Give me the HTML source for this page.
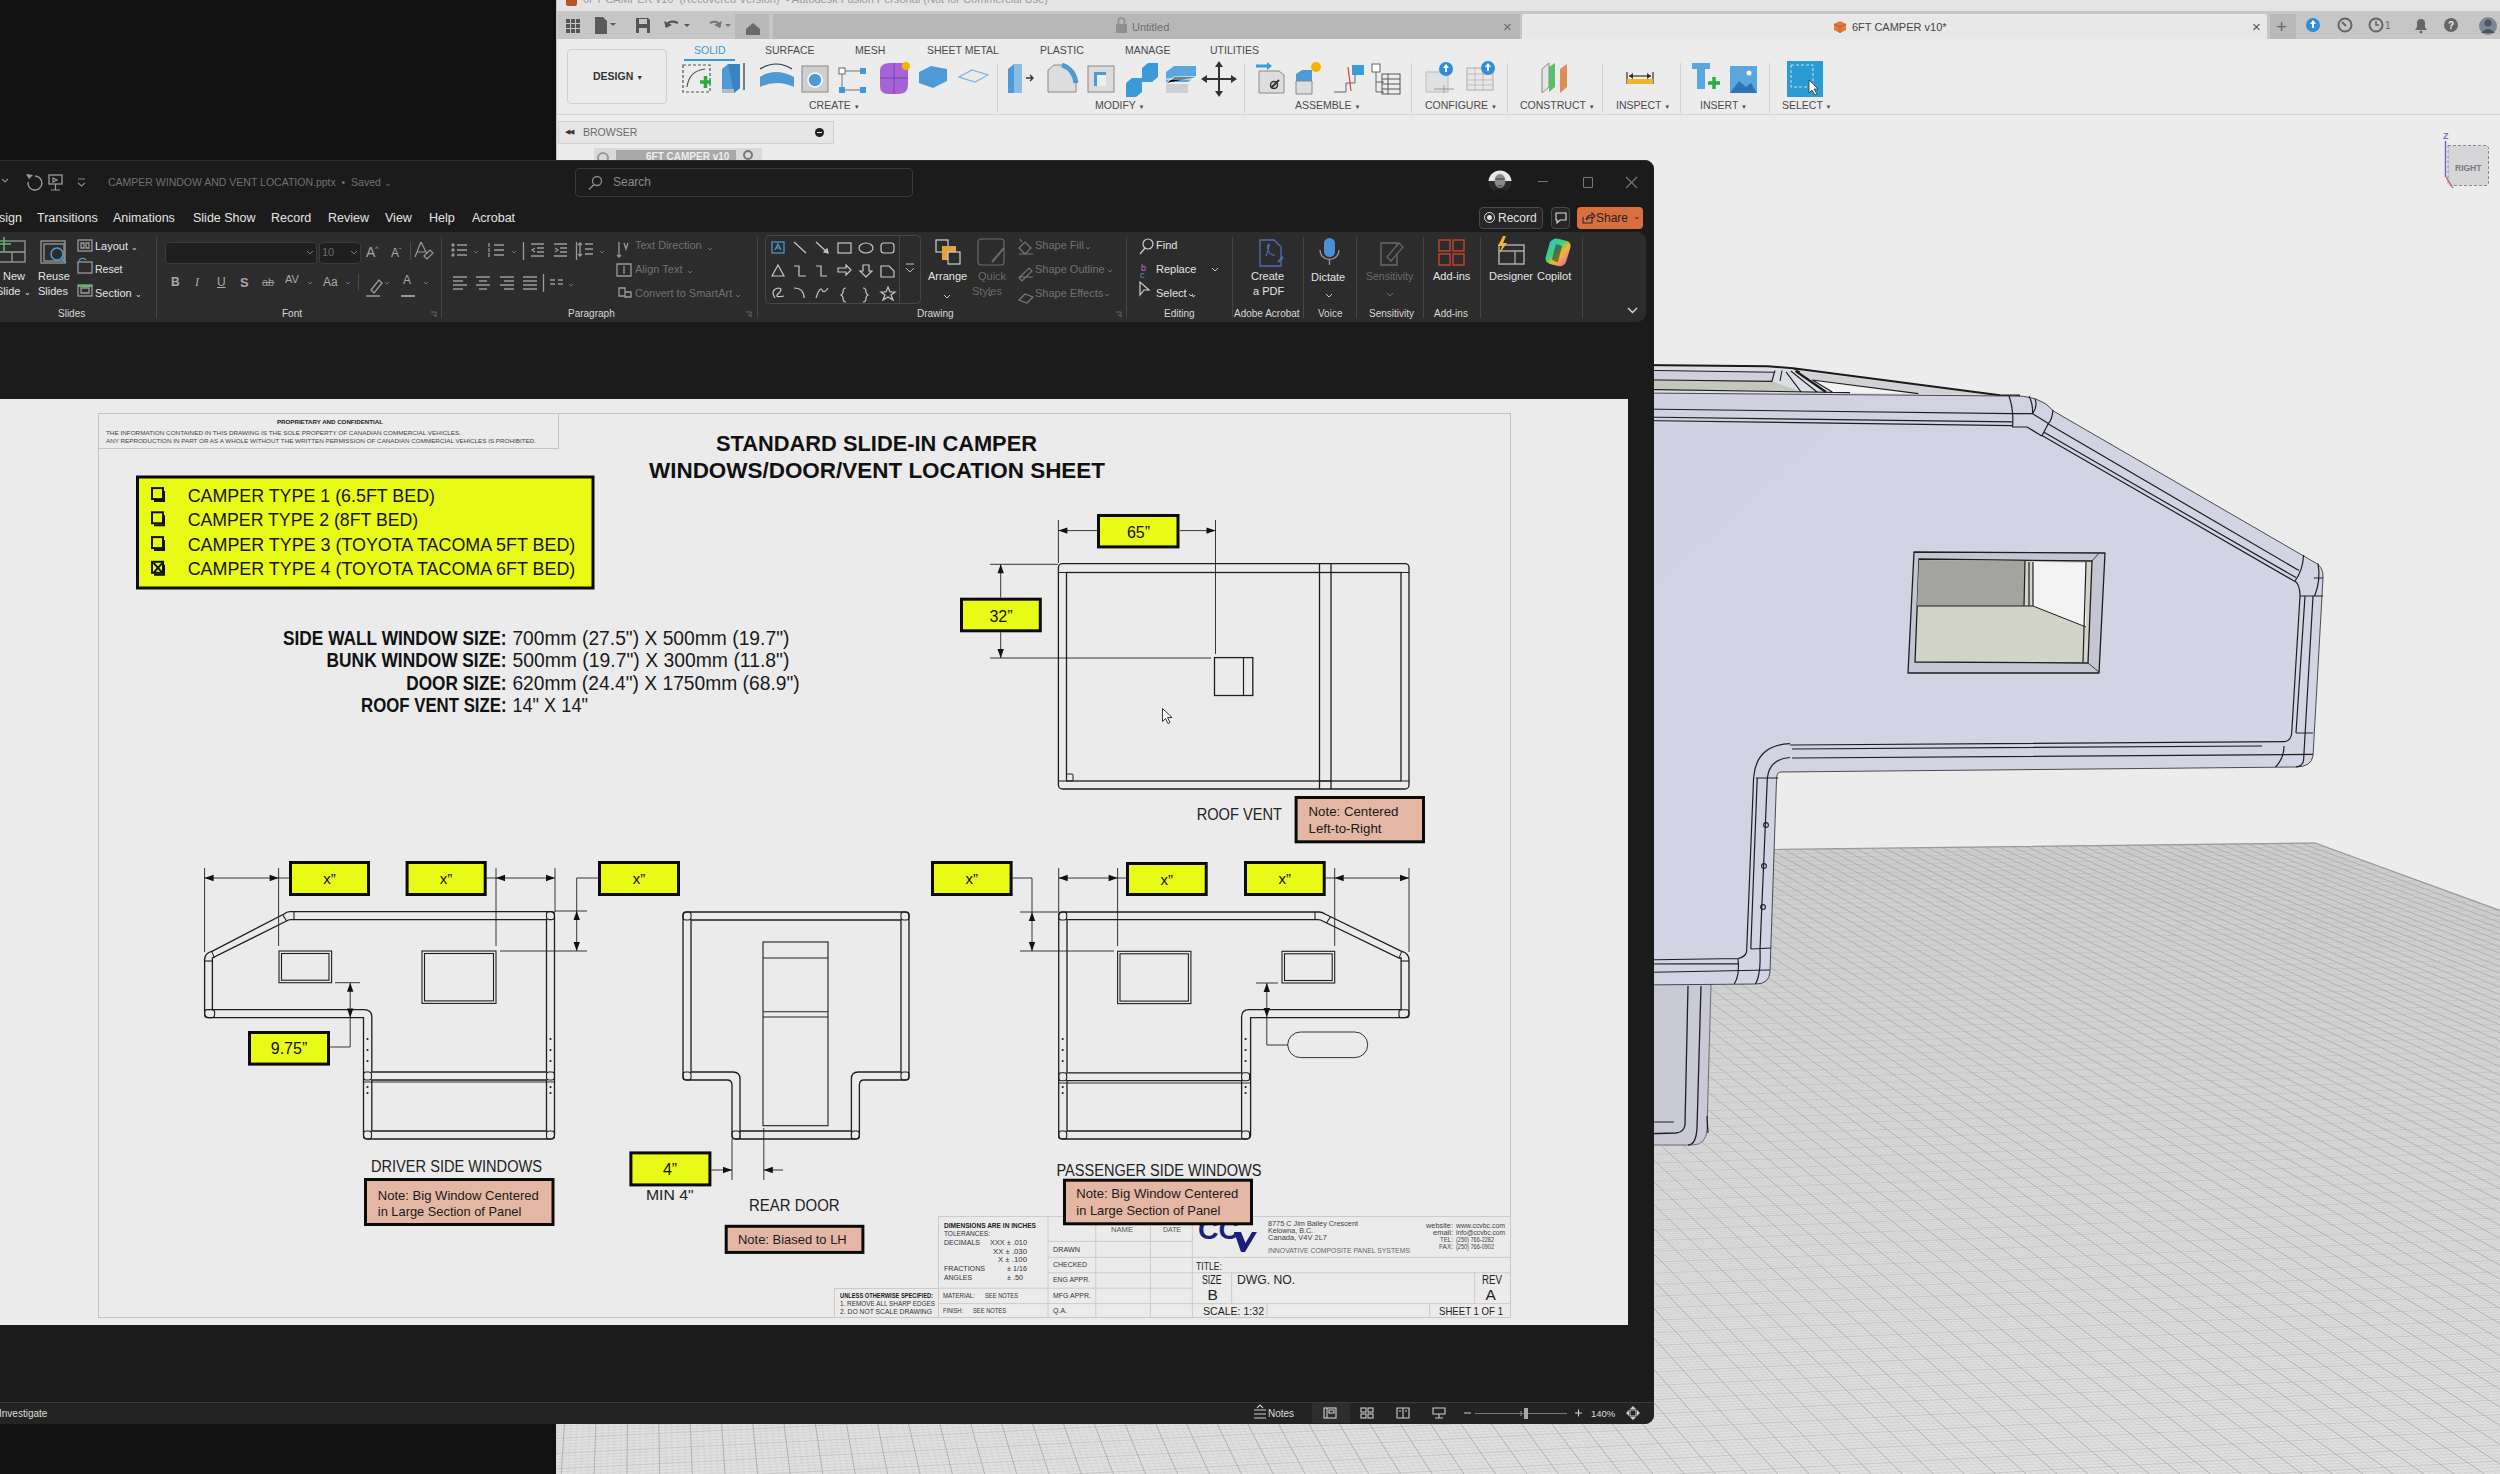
<!DOCTYPE html>
<html><head><meta charset="utf-8">
<style>
*{margin:0;padding:0;box-sizing:border-box}
html,body{width:2500px;height:1474px;overflow:hidden;background:#0f0f0f;font-family:"Liberation Sans",sans-serif;position:relative}
.a{position:absolute}
.t{position:absolute;white-space:nowrap;line-height:1}
#fus{left:556px;top:0;width:1944px;height:1474px;background:#ececec;overflow:hidden}
.fl{position:absolute;white-space:nowrap;line-height:1;font-size:10.5px;color:#4a4a4a}
.ft{position:absolute;white-space:nowrap;line-height:1;font-size:10.5px;color:#505050}
#ppt{left:0;top:160px;width:1654px;height:1264px;background:#1b1b1b;border-radius:0 9px 9px 0;overflow:hidden;box-shadow:inset 0 1px 0 #2f2f2f}
#ribbon{left:0;top:72px;width:1646px;height:90px;background:#2c2c2c;border-radius:0 9px 9px 0}
.w{position:absolute;white-space:nowrap;line-height:1;color:#e4e4e4;font-size:12px}
.g{position:absolute;white-space:nowrap;line-height:1;color:#7c7c7c;font-size:12px}
.gl{position:absolute;white-space:nowrap;line-height:1;color:#d8d8d8;font-size:11px}
.sep{position:absolute;width:1px;background:#454545}
#status{left:0;top:1242px;width:1654px;height:22px;background:#232323;border-top:1px solid #3b3b3b}
#slide{left:0;top:239px;width:1628px;height:926px;background:#ebebeb}
</style></head><body>

<div id="fus" class="a">
  <div class="a" style="left:0;top:0;width:1944px;height:11px;background:#e4e4e4;overflow:hidden">
    <div class="a" style="left:10px;top:-5px;width:11px;height:11px;background:#b5532c;border-radius:2px"></div>
    <div class="t" style="left:27px;top:-6px;font-size:11px;color:#9a9a9a">6FT CAMPER v10 &nbsp;(Recovered Version) &nbsp;- Autodesk Fusion Personal (Not for Commercial Use)</div>
  </div>
  <div class="a" style="left:0;top:11px;width:1944px;height:28px;background:#c6c6c6"></div>
  <div class="a" style="left:179px;top:14px;width:34px;height:25px;background:#b9b9b9"></div>
  <div class="a" style="left:217px;top:14px;width:747px;height:25px;background:#b7b7b7"></div>
  <div class="a" style="left:966px;top:14px;width:745px;height:25px;background:#e8e8e8;border-radius:2px 2px 0 0"></div>
  <div class="a" style="left:1714px;top:14px;width:26px;height:25px;background:#b9b9b9"></div>
  <!-- qat icons -->
  <svg class="a" style="left:0;top:11px" width="230" height="28">
    <g fill="#555"><rect x="10" y="8" width="4" height="4"/><rect x="15" y="8" width="4" height="4"/><rect x="20" y="8" width="4" height="4"/><rect x="10" y="13" width="4" height="4"/><rect x="15" y="13" width="4" height="4"/><rect x="20" y="13" width="4" height="4"/><rect x="10" y="18" width="4" height="4"/><rect x="15" y="18" width="4" height="4"/><rect x="20" y="18" width="4" height="4"/></g>
    <path d="M39 6h8l4 4v13h-12z" fill="#5a5a5a"/><path d="M54 12l3 3 3-3z" fill="#5a5a5a"/>
    <path d="M80 7h12l2 2v13h-14z M83 8v5h8v-5z M83 17h8v5h-8z" fill="#555" fill-rule="evenodd"/>
    <path d="M110 16q2-8 12-4" stroke="#555" stroke-width="2.2" fill="none"/><path d="M108 10l2 7 6-3z" fill="#555"/><path d="M128 13l3 3 3-3z" fill="#555"/>
    <path d="M164 16q-2-8-10-4" stroke="#777" stroke-width="2" fill="none"/><path d="M166 10l-2 7-6-3z" fill="#777"/><path d="M169 13l3 3 3-3z" fill="#777"/>
    <path d="M190 18l7-6 7 6v6h-14z" fill="#6a6a6a"/>
  </svg>
  <svg class="a" style="left:556px;top:15px" width="20" height="22"><rect x="4" y="9" width="11" height="9" rx="1" fill="#8f8f8f"/><path d="M6.5 9v-3a3 3 0 0 1 6 0v3" stroke="#8f8f8f" stroke-width="1.6" fill="none"/></svg>
  <div class="ft" style="left:576px;top:22px;font-size:11px;color:#6e6e6e">Untitled</div>
  <div class="ft" style="left:947px;top:19px;font-size:15px;color:#6a6a6a">×</div>
  <svg class="a" style="left:1277px;top:20px" width="14" height="14"><path d="M7 1l6 3v6l-6 3-6-3v-6z" fill="#e07b39"/><path d="M1 4l6 3 6-3M7 7v6" stroke="#c05f22" stroke-width="1" fill="none"/></svg>
  <div class="ft" style="left:1296px;top:22px;font-size:11px;color:#444">6FT CAMPER v10*</div>
  <div class="ft" style="left:1696px;top:19px;font-size:15px;color:#555">×</div>
  <div class="ft" style="left:1720px;top:17px;font-size:19px;color:#666">+</div>
  <svg class="a" style="left:1748px;top:14px" width="196" height="25">
    <circle cx="9" cy="11" r="7" fill="#2f8ddb"/><path d="M9 6l-3 4h2v4h2v-4h2z" fill="#fff"/>
    <circle cx="41" cy="11" r="6.5" fill="none" stroke="#666" stroke-width="2"/><path d="M38 8l4 4" stroke="#666" stroke-width="2"/>
    <circle cx="72" cy="11" r="6.5" fill="none" stroke="#666" stroke-width="2"/><path d="M72 7v4h3" stroke="#666" stroke-width="1.5" fill="none"/>
    <text x="81" y="15" font-size="10" fill="#666" font-family="Liberation Sans">1</text>
    <path d="M111 16h12l-2-3v-4a4 4 0 0 0-8 0v4z" fill="#666"/><circle cx="117" cy="18" r="1.5" fill="#666"/>
    <circle cx="147" cy="11" r="7" fill="#666"/><text x="144" y="15" font-size="10" font-weight="bold" fill="#ececec" font-family="Liberation Sans">?</text>
    <circle cx="184" cy="12" r="9" fill="#7d8693"/><circle cx="184" cy="9" r="3.5" fill="#4b5563"/><path d="M177 19q7-8 14 0" fill="#4b5563"/>
  </svg>
  <!-- toolbar -->
  <div class="a" style="left:0;top:39px;width:1944px;height:76px;background:#ececec;border-bottom:1px solid #d4d4d4"></div>
  <div class="a" style="left:11px;top:49px;width:100px;height:55px;border:1px solid #d0d0d0;border-radius:4px;background:#ebebeb"></div>
  <div class="t" style="left:37px;top:71px;font-size:10.5px;font-weight:bold;color:#333">DESIGN <span style="font-size:7px">▼</span></div>
  <div class="fl" style="left:138px;top:45px;color:#3a9ad5">SOLID</div>
  <div class="a" style="left:128px;top:59px;width:51px;height:2px;background:#2e9bd6"></div>
  <div class="fl" style="left:209px;top:45px">SURFACE</div>
  <div class="fl" style="left:299px;top:45px">MESH</div>
  <div class="fl" style="left:371px;top:45px">SHEET METAL</div>
  <div class="fl" style="left:484px;top:45px">PLASTIC</div>
  <div class="fl" style="left:569px;top:45px">MANAGE</div>
  <div class="fl" style="left:654px;top:45px">UTILITIES</div>
  <div class="fl" style="left:253px;top:100px">CREATE <span style="font-size:6px">▼</span></div>
  <div class="fl" style="left:539px;top:100px">MODIFY <span style="font-size:6px">▼</span></div>
  <div class="fl" style="left:739px;top:100px">ASSEMBLE <span style="font-size:6px">▼</span></div>
  <div class="fl" style="left:869px;top:100px">CONFIGURE <span style="font-size:6px">▼</span></div>
  <div class="fl" style="left:964px;top:100px">CONSTRUCT <span style="font-size:6px">▼</span></div>
  <div class="fl" style="left:1060px;top:100px">INSPECT <span style="font-size:6px">▼</span></div>
  <div class="fl" style="left:1144px;top:100px">INSERT <span style="font-size:6px">▼</span></div>
  <div class="fl" style="left:1226px;top:100px">SELECT <span style="font-size:6px">▼</span></div>
  <svg class="a" style="left:0;top:39px" width="1300" height="76">
    <g stroke="#d2d2d2" stroke-width="1"><path d="M441.5 24v50M688.5 24v50M855.5 24v50M951.5 24v50M1046.5 24v50M1124.5 24v50M1213.5 24v50"/></g>
    <!-- create -->
    <rect x="127" y="26" width="27" height="27" fill="none" stroke="#555" stroke-width="1.2" stroke-dasharray="3 2"/><path d="M131 48q2-16 18-18" stroke="#555" fill="none" stroke-width="1.2"/><path d="M144 43h11M149.5 37v12" stroke="#2eaa3e" stroke-width="3.5"/>
    <path d="M166 30l6-5h12v24l-6 5h-12z" fill="#4e9ad6"/><path d="M172 25h12v24l-6 5z" fill="#3b82c0"/><path d="M166 50h12v4h-12z" fill="#bbb"/><path d="M188 24v27" stroke="#333" stroke-width="1.2"/>
    <path d="M204 38q15-10 34 0v10q-17-8-34 0z" fill="#4e9ad6"/><path d="M204 30q16-10 32 0" stroke="#333" fill="none" stroke-width="1.2"/>
    <rect x="246" y="27" width="26" height="26" fill="#cfcfcf" stroke="#888"/><circle cx="259" cy="41" r="7" fill="#4e9ad6" stroke="#fff" stroke-width="1.5"/>
    <rect x="283" y="29" width="6" height="6" fill="#fff" stroke="#666"/><rect x="304" y="29" width="6" height="6" fill="#3b9ad8"/><rect x="283" y="48" width="6" height="6" fill="#3b9ad8"/><rect x="304" y="48" width="6" height="6" fill="#3b9ad8"/><path d="M289 32h15M286 35v13M289 51h15" stroke="#777"/>
    <path d="M324 32q0-8 10-8h12q6 0 6 8v14q0 9-10 9h-10q-8 0-8-8z" fill="#a663d6"/><path d="M338 24v31M324 39h28" stroke="#7d3fb0"/><circle cx="350" cy="27" r="4" fill="#f5b400"/>
    <path d="M363 33l12-6 16 3v12l-14 7-14-5z" fill="#4e9ad6"/>
    <path d="M403 38l13-7 16 5-13 7z" fill="none" stroke="#7ab3e0" stroke-width="1.2"/>
    <!-- modify -->
    <path d="M452 30l6-5h8v29h-14z" fill="#4e9ad6"/><path d="M458 25h8v29h-8z" fill="#8bbde5"/><path d="M470 39h7M474 36l3 3-3 3" stroke="#333" stroke-width="1.4" fill="none"/>
    <path d="M492 53v-22l6-5h8q12 4 14 18v9z" fill="#ddd" stroke="#888"/><path d="M506 26q12 4 14 18" stroke="#4e9ad6" stroke-width="5" fill="none"/>
    <rect x="532" y="27" width="26" height="26" fill="#ddd" stroke="#888"/><path d="M538 33h12v14h-12z" fill="#4e9ad6"/><path d="M541 36h9v11h-9z" fill="#eee"/>
    <path d="M570 44l6-5h10v-10l6-5h10v14l-6 5h-10v10l-6 5h-10z" fill="#3b9ad8"/>
    <path d="M610 33l8-6h22v10l-8 6h-22z" fill="#5aa7e0"/><path d="M610 40h30M610 44l8-6h22" stroke="#fff" stroke-width="1"/><path d="M610 45h22v9h-22z" fill="#cfcfcf"/>
    <path d="M663 25v30M648 40h30" stroke="#333" stroke-width="2"/><path d="M663 22l-4 6h8zM663 58l-4-6h8zM645 40l6-4v8zM681 40l-6-4v8z" fill="#333"/>
    <!-- assemble -->
    <path d="M703 32h20l5 4v18h-25z" fill="#ddd" stroke="#888"/><path d="M700 27h12" stroke="#3b9ad8" stroke-width="3"/><path d="M711 23l5 4-5 4z" fill="#3b9ad8"/><path d="M715 49l8-8" stroke="#333" stroke-width="2"/><circle cx="718" cy="46" r="3.5" fill="none" stroke="#333" stroke-width="1.5"/>
    <path d="M740 35l6-4h10v24h-16z" fill="#4e9ad6"/><path d="M740 42h16v13h-16z" fill="#ddd" stroke="#888"/><circle cx="760" cy="28" r="5" fill="#f5b400"/>
    <path d="M778 53h12v-9h9v-16" stroke="#666" fill="none"/><path d="M792 28l3 24" stroke="#d44" stroke-width="1.2"/><rect x="796" y="26" width="12" height="10" fill="#3b9ad8"/>
    <rect x="816" y="25" width="8" height="8" fill="#fff" stroke="#666"/><path d="M820 33v20M820 43h8M820 53h8" stroke="#666"/><rect x="826" y="35" width="18" height="20" fill="none" stroke="#555"/><path d="M826 40h18M826 45h18M826 50h18M832 35v20" stroke="#555"/>
    <!-- configure -->
    <rect x="870" y="33" width="22" height="20" fill="#e0e0e0" stroke="#bbb"/><circle cx="890" cy="30" r="7" fill="#2f8ddb"/><path d="M890 25l-3 4h2v4h2v-4h2z" fill="#fff"/><path d="M878 50h20M888 46v8" stroke="#999"/>
    <rect x="911" y="29" width="26" height="22" fill="#e8e8e8" stroke="#aaa"/><path d="M911 35h26M919 29v22M911 41h26M911 46h26M927 29v22" stroke="#bbb"/><circle cx="932" cy="29" r="7" fill="#2f8ddb"/><path d="M932 24l-3 4h2v4h2v-4h2z" fill="#fff"/>
    <!-- construct -->
    <path d="M986 30l7-6v24l-7 6z" fill="#e5e5e5" stroke="#888"/><path d="M993 28l6-4v24l-6 5z" fill="#5bbf6a"/><path d="M1004 30l7-5v23l-7 6z" fill="#e08a55"/>
    <!-- inspect -->
    <path d="M1071 33v12M1097 33v12" stroke="#333" stroke-width="1.2"/><path d="M1073 37h22" stroke="#333" stroke-width="1.2"/><path d="M1073 37l4-3v6zM1095 37l-4-3v6z" fill="#333"/><rect x="1071" y="40" width="26" height="5" fill="#f0b429"/>
    <!-- insert -->
    <path d="M1136 24h18v6h-5v20h-8v-20h-5z" fill="#5aa7e0"/><path d="M1152 44h12M1158 38v12" stroke="#2eaa3e" stroke-width="3.5"/>
    <rect x="1174" y="27" width="27" height="27" fill="#5aa7e0"/><path d="M1174 54l9-12 7 6 5-4 6 10z" fill="#2f75b5"/><circle cx="1193" cy="34" r="2.5" fill="#fff7c0"/>
    <!-- select -->
    <rect x="1231" y="22" width="36" height="36" fill="#2b9bd4"/><rect x="1235" y="26" width="22" height="22" fill="none" stroke="#bfe6ff" stroke-dasharray="3 2"/><path d="M1253 41l0 13 3-3 3 5 2-1-3-5h4z" fill="#fff" stroke="#333" stroke-width=".8"/>
  </svg>
  <!-- browser -->
  <div class="a" style="left:2px;top:121px;width:276px;height:23px;background:#e6e6e6;border:1px solid #d0d0d0"></div>
  <div class="fl" style="left:9px;top:129px;font-size:6.5px;color:#333;letter-spacing:-1px">◀◀</div>
  <div class="fl" style="left:27px;top:127px;font-size:10.5px;color:#6a6a6a">BROWSER</div>
  <div class="a" style="left:259px;top:128px;width:9px;height:9px;border-radius:50%;background:#222"></div>
  <div class="a" style="left:261px;top:132px;width:5px;height:1px;background:#eee"></div>
  <div class="a" style="left:38px;top:148px;width:168px;height:12px;background:#dadada"></div>
  <div class="a" style="left:60px;top:150px;width:120px;height:10px;background:#a9a9a9"></div>
  <div class="t" style="left:90px;top:152px;font-size:10px;color:#eee;font-weight:bold">6FT CAMPER v10</div>
  <div class="a" style="left:187px;top:150px;width:10px;height:10px;border-radius:50%;border:2px solid #777"></div>
  <div class="a" style="left:41px;top:152px;width:12px;height:12px;border-radius:50%;border:2px solid #999"></div>
  <div class="a" style="left:0;top:0;width:1px;height:1474px;background:#c4c4c4"></div>
  <!-- view cube -->
  <svg class="a" style="left:1864px;top:120px" width="80" height="80">
    <text x="23" y="19" font-size="9" font-weight="bold" fill="#7f72c9" font-family="Liberation Sans">Z</text>
    <path d="M25.5 21v36" stroke="#6e62c0" stroke-width="1.4"/>
    <path d="M28 25.5h39l1.5 2v36l-1.5 2h-37l-2-2z" fill="#d6d6d8" stroke="#8a8a8a" stroke-width="1" stroke-dasharray="3 2"/>
    <path d="M26 57l7 11" stroke="#c45a6a" stroke-width="1.3"/>
    <text x="35" y="51" font-size="8.5" font-weight="bold" fill="#7a7a7a" font-family="Liberation Sans">RIGHT</text>
  </svg>
</div>

<!-- 3D viewport content -->
<svg class="a" style="left:0;top:0" width="2500" height="1474">
  <defs>
    <linearGradient id="gridg" x1="0" y1="0" x2="0" y2="1"><stop offset="0" stop-color="#d6d6d6"/><stop offset="0.3" stop-color="#dcdcdc"/><stop offset="1" stop-color="#e2e2e2"/></linearGradient>
    <linearGradient id="bodyg" x1="0" y1="0" x2="1" y2="1"><stop offset="0" stop-color="#d0d2e2"/><stop offset="1" stop-color="#d4d6e6"/></linearGradient>
  </defs>
  <polygon points="2315.0,843.0 545.7,866.0 437.3,1599.3 3841.4,1403.4" fill="url(#gridg)"/><path d="M2312.3 843.0L3836.8 1403.7M2309.6 843.1L3832.2 1404.0M2306.9 843.1L3827.5 1404.2M2304.2 843.1L3822.9 1404.5M2298.8 843.2L3813.7 1405.0M2296.1 843.2L3809.1 1405.3M2293.4 843.3L3804.4 1405.6M2290.7 843.3L3799.8 1405.8M2285.3 843.4L3790.5 1406.4M2282.6 843.4L3785.9 1406.6M2279.9 843.5L3781.2 1406.9M2277.2 843.5L3776.6 1407.2M2271.8 843.6L3767.3 1407.7M2269.1 843.6L3762.6 1408.0M2266.4 843.6L3758.0 1408.2M2263.7 843.7L3753.3 1408.5M2258.2 843.7L3743.9 1409.0M2255.5 843.8L3739.3 1409.3M2252.8 843.8L3734.6 1409.6M2250.1 843.8L3729.9 1409.8M2244.7 843.9L3720.5 1410.4M2242.0 843.9L3715.8 1410.7M2239.2 844.0L3711.1 1410.9M2236.5 844.0L3706.4 1411.2M2231.1 844.1L3697.0 1411.7M2228.3 844.1L3692.3 1412.0M2225.6 844.2L3687.6 1412.3M2222.9 844.2L3682.9 1412.6M2217.4 844.3L3673.4 1413.1M2214.7 844.3L3668.7 1413.4M2212.0 844.3L3664.0 1413.6M2209.3 844.4L3659.3 1413.9M2203.8 844.4L3649.8 1414.5M2201.1 844.5L3645.0 1414.7M2198.3 844.5L3640.3 1415.0M2195.6 844.6L3635.5 1415.3M2190.1 844.6L3626.0 1415.8M2187.4 844.7L3621.3 1416.1M2184.6 844.7L3616.5 1416.4M2181.9 844.7L3611.7 1416.6M2176.4 844.8L3602.2 1417.2M2173.7 844.8L3597.4 1417.5M2170.9 844.9L3592.6 1417.7M2168.2 844.9L3587.8 1418.0M2162.7 845.0L3578.3 1418.6M2159.9 845.0L3573.5 1418.8M2157.2 845.0L3568.7 1419.1M2154.4 845.1L3563.9 1419.4M2148.9 845.2L3554.3 1420.0M2146.2 845.2L3549.4 1420.2M2143.4 845.2L3544.6 1420.5M2140.7 845.3L3539.8 1420.8M2135.1 845.3L3530.2 1421.3M2132.4 845.4L3525.3 1421.6M2129.6 845.4L3520.5 1421.9M2126.9 845.4L3515.7 1422.2M2121.3 845.5L3506.0 1422.7M2118.6 845.6L3501.1 1423.0M2115.8 845.6L3496.3 1423.3M2113.0 845.6L3491.4 1423.6M2107.5 845.7L3481.7 1424.1M2104.7 845.7L3476.8 1424.4M2102.0 845.8L3472.0 1424.7M2099.2 845.8L3467.1 1425.0M2093.6 845.9L3457.3 1425.5M2090.9 845.9L3452.5 1425.8M2088.1 845.9L3447.6 1426.1M2085.3 846.0L3442.7 1426.4M2079.8 846.1L3432.9 1426.9M2077.0 846.1L3428.0 1427.2M2074.2 846.1L3423.1 1427.5M2071.4 846.2L3418.2 1427.8M2065.8 846.2L3408.4 1428.3M2063.1 846.3L3403.4 1428.6M2060.3 846.3L3398.5 1428.9M2057.5 846.3L3393.6 1429.2M2051.9 846.4L3383.7 1429.8M2049.1 846.5L3378.8 1430.0M2046.3 846.5L3373.9 1430.3M2043.5 846.5L3368.9 1430.6M2037.9 846.6L3359.0 1431.2M2035.1 846.6L3354.1 1431.5M2032.3 846.7L3349.1 1431.8M2029.5 846.7L3344.1 1432.0M2023.9 846.8L3334.2 1432.6M2021.1 846.8L3329.2 1432.9M2018.3 846.9L3324.3 1433.2M2015.5 846.9L3319.3 1433.5M2009.9 847.0L3309.3 1434.0M2007.1 847.0L3304.3 1434.3M2004.3 847.0L3299.3 1434.6M2001.5 847.1L3294.3 1434.9M1995.9 847.1L3284.3 1435.5M1993.1 847.2L3279.3 1435.8M1990.3 847.2L3274.3 1436.1M1987.4 847.3L3269.3 1436.3M1981.8 847.3L3259.2 1436.9M1979.0 847.4L3254.2 1437.2M1976.2 847.4L3249.2 1437.5M1973.4 847.4L3244.1 1437.8M1967.7 847.5L3234.1 1438.4M1964.9 847.5L3229.0 1438.7M1962.1 847.6L3224.0 1439.0M1959.3 847.6L3218.9 1439.2M1953.6 847.7L3208.8 1439.8M1950.8 847.7L3203.7 1440.1M1947.9 847.8L3198.6 1440.4M1945.1 847.8L3193.6 1440.7M1939.4 847.9L3183.4 1441.3M1936.6 847.9L3178.3 1441.6M1933.8 848.0L3173.2 1441.9M1930.9 848.0L3168.2 1442.2M1925.3 848.1L3158.0 1442.8M1922.4 848.1L3152.9 1443.0M1919.6 848.1L3147.7 1443.3M1916.8 848.2L3142.6 1443.6M1911.1 848.2L3132.4 1444.2M1908.2 848.3L3127.3 1444.5M1905.4 848.3L3122.2 1444.8M1902.5 848.4L3117.0 1445.1M1896.8 848.4L3106.8 1445.7M1894.0 848.5L3101.6 1446.0M1891.1 848.5L3096.5 1446.3M1888.3 848.5L3091.3 1446.6M1882.6 848.6L3081.0 1447.2M1879.7 848.7L3075.8 1447.5M1876.9 848.7L3070.7 1447.8M1874.0 848.7L3065.5 1448.1M1868.3 848.8L3055.2 1448.7M1865.4 848.8L3050.0 1449.0M1862.6 848.9L3044.8 1449.3M1859.7 848.9L3039.6 1449.6M1854.0 849.0L3029.2 1450.2M1851.1 849.0L3024.0 1450.5M1848.2 849.1L3018.8 1450.8M1845.4 849.1L3013.6 1451.1M1839.6 849.2L3003.2 1451.7M1836.8 849.2L2998.0 1452.0M1833.9 849.2L2992.7 1452.3M1831.0 849.3L2987.5 1452.6M1825.3 849.4L2977.1 1453.2M1822.4 849.4L2971.8 1453.5M1819.5 849.4L2966.6 1453.8M1816.6 849.5L2961.3 1454.1M1810.9 849.5L2950.8 1454.7M1808.0 849.6L2945.6 1455.0M1805.1 849.6L2940.3 1455.3M1802.2 849.7L2935.0 1455.6M1796.5 849.7L2924.5 1456.2M1793.6 849.8L2919.2 1456.5M1790.7 849.8L2913.9 1456.8M1787.8 849.8L2908.6 1457.1M1782.0 849.9L2898.1 1457.7M1779.1 850.0L2892.8 1458.0M1776.2 850.0L2887.5 1458.3M1773.3 850.0L2882.1 1458.6M1767.5 850.1L2871.5 1459.2M1764.6 850.1L2866.2 1459.5M1761.7 850.2L2860.9 1459.8M1758.8 850.2L2855.6 1460.2M1753.0 850.3L2844.9 1460.8M1750.1 850.3L2839.5 1461.1M1747.2 850.4L2834.2 1461.4M1744.3 850.4L2828.9 1461.7M1738.5 850.5L2818.2 1462.3M1735.6 850.5L2812.8 1462.6M1732.7 850.6L2807.4 1462.9M1729.8 850.6L2802.1 1463.2M1723.9 850.7L2791.3 1463.9M1721.0 850.7L2785.9 1464.2M1718.1 850.8L2780.6 1464.5M1715.2 850.8L2775.2 1464.8M1709.3 850.9L2764.4 1465.4M1706.4 850.9L2759.0 1465.7M1703.5 850.9L2753.6 1466.0M1700.6 851.0L2748.2 1466.3M1694.7 851.1L2737.3 1467.0M1691.8 851.1L2731.9 1467.3M1688.9 851.1L2726.5 1467.6M1685.9 851.2L2721.1 1467.9M1680.1 851.2L2710.2 1468.5M1677.1 851.3L2704.7 1468.8M1674.2 851.3L2699.3 1469.1M1671.3 851.4L2693.8 1469.5M1665.4 851.4L2682.9 1470.1M1662.5 851.5L2677.5 1470.4M1659.5 851.5L2672.0 1470.7M1656.6 851.6L2666.5 1471.0M1650.7 851.6L2655.6 1471.7M1647.8 851.7L2650.1 1472.0M1644.8 851.7L2644.6 1472.3M1641.9 851.7L2639.1 1472.6M1636.0 851.8L2628.1 1473.2M1633.0 851.9L2622.6 1473.6M1630.1 851.9L2617.1 1473.9M1627.1 851.9L2611.6 1474.2M1621.2 852.0L2600.5 1474.8M1618.3 852.0L2595.0 1475.1M1615.3 852.1L2589.5 1475.5M1612.3 852.1L2583.9 1475.8M1606.4 852.2L2572.9 1476.4M1603.5 852.2L2567.3 1476.7M1600.5 852.3L2561.8 1477.1M1597.5 852.3L2556.2 1477.4M1591.6 852.4L2545.1 1478.0M1588.6 852.4L2539.5 1478.3M1585.7 852.5L2533.9 1478.7M1582.7 852.5L2528.4 1479.0M1576.8 852.6L2517.2 1479.6M1573.8 852.6L2511.6 1479.9M1570.8 852.7L2506.0 1480.3M1567.8 852.7L2500.4 1480.6M1561.9 852.8L2489.2 1481.2M1558.9 852.8L2483.6 1481.6M1555.9 852.9L2478.0 1481.9M1552.9 852.9L2472.3 1482.2M1547.0 853.0L2461.1 1482.9M1544.0 853.0L2455.4 1483.2M1541.0 853.1L2449.8 1483.5M1538.0 853.1L2444.2 1483.8M1532.0 853.2L2432.9 1484.5M1529.1 853.2L2427.2 1484.8M1526.1 853.2L2421.5 1485.1M1523.1 853.3L2415.9 1485.5M1517.1 853.4L2404.5 1486.1M1514.1 853.4L2398.8 1486.4M1511.1 853.4L2393.2 1486.8M1508.1 853.5L2387.5 1487.1M1502.1 853.6L2376.1 1487.7M1499.1 853.6L2370.4 1488.1M1496.1 853.6L2364.7 1488.4M1493.1 853.7L2359.0 1488.7M1487.1 853.8L2347.5 1489.4M1484.1 853.8L2341.8 1489.7M1481.1 853.8L2336.1 1490.0M1478.0 853.9L2330.3 1490.4M1472.0 853.9L2318.9 1491.0M1469.0 854.0L2313.1 1491.4M1466.0 854.0L2307.4 1491.7M1463.0 854.1L2301.6 1492.0M1456.9 854.1L2290.1 1492.7M1453.9 854.2L2284.3 1493.0M1450.9 854.2L2278.5 1493.4M1447.9 854.3L2272.8 1493.7M1441.8 854.3L2261.2 1494.4M1438.8 854.4L2255.4 1494.7M1435.8 854.4L2249.6 1495.0M1432.8 854.5L2243.8 1495.4M1426.7 854.5L2232.2 1496.0M1423.7 854.6L2226.4 1496.4M1420.6 854.6L2220.5 1496.7M1417.6 854.7L2214.7 1497.0M1411.5 854.7L2203.0 1497.7M1408.5 854.8L2197.2 1498.0M1405.5 854.8L2191.4 1498.4M1402.4 854.9L2185.5 1498.7M1396.3 854.9L2173.8 1499.4M1393.3 855.0L2167.9 1499.7M1390.2 855.0L2162.1 1500.1M1387.2 855.1L2156.2 1500.4M1381.1 855.1L2144.4 1501.1M1378.1 855.2L2138.6 1501.4M1375.0 855.2L2132.7 1501.7M1372.0 855.2L2126.8 1502.1M1365.8 855.3L2115.0 1502.8M1362.8 855.4L2109.1 1503.1M1359.7 855.4L2103.1 1503.4M1356.7 855.4L2097.2 1503.8M1350.6 855.5L2085.4 1504.5M1347.5 855.6L2079.4 1504.8M1344.4 855.6L2073.5 1505.2M1341.4 855.6L2067.6 1505.5M1335.2 855.7L2055.7 1506.2M1332.2 855.8L2049.7 1506.5M1329.1 855.8L2043.7 1506.9M1326.0 855.8L2037.8 1507.2M1319.9 855.9L2025.8 1507.9M1316.8 856.0L2019.8 1508.2M1313.7 856.0L2013.9 1508.6M1310.7 856.0L2007.9 1508.9M1304.5 856.1L1995.9 1509.6M1301.4 856.2L1989.9 1510.0M1298.4 856.2L1983.9 1510.3M1295.3 856.2L1977.8 1510.7M1289.1 856.3L1965.8 1511.4M1286.0 856.4L1959.8 1511.7M1282.9 856.4L1953.7 1512.0M1279.8 856.4L1947.7 1512.4M1273.7 856.5L1935.6 1513.1M1270.6 856.6L1929.5 1513.4M1267.5 856.6L1923.5 1513.8M1264.4 856.6L1917.4 1514.1M1258.2 856.7L1905.3 1514.8M1255.1 856.8L1899.2 1515.2M1252.0 856.8L1893.1 1515.5M1248.9 856.8L1887.0 1515.9M1242.7 856.9L1874.8 1516.6M1239.6 857.0L1868.7 1516.9M1236.5 857.0L1862.6 1517.3M1233.4 857.0L1856.5 1517.6M1227.2 857.1L1844.3 1518.3M1224.1 857.2L1838.1 1518.7M1220.9 857.2L1832.0 1519.0M1217.8 857.3L1825.9 1519.4M1211.6 857.3L1813.6 1520.1M1208.5 857.4L1807.4 1520.5M1205.4 857.4L1801.3 1520.8M1202.2 857.5L1795.1 1521.2M1196.0 857.5L1782.8 1521.9M1192.9 857.6L1776.6 1522.2M1189.8 857.6L1770.4 1522.6M1186.6 857.7L1764.2 1523.0M1180.4 857.7L1751.8 1523.7M1177.3 857.8L1745.6 1524.0M1174.1 857.8L1739.4 1524.4M1171.0 857.9L1733.2 1524.7M1164.7 857.9L1720.7 1525.5M1161.6 858.0L1714.5 1525.8M1158.5 858.0L1708.3 1526.2M1155.3 858.1L1702.0 1526.5M1149.0 858.1L1689.5 1527.2M1145.9 858.2L1683.3 1527.6M1142.8 858.2L1677.0 1528.0M1139.6 858.3L1670.8 1528.3M1133.3 858.3L1658.2 1529.0M1130.2 858.4L1651.9 1529.4M1127.0 858.4L1645.6 1529.8M1123.9 858.5L1639.4 1530.1M1117.6 858.6L1626.8 1530.9M1114.4 858.6L1620.5 1531.2M1111.3 858.6L1614.1 1531.6M1108.1 858.7L1607.8 1531.9M1101.8 858.8L1595.2 1532.7M1098.6 858.8L1588.8 1533.0M1095.5 858.8L1582.5 1533.4M1092.3 858.9L1576.2 1533.8M1086.0 859.0L1563.5 1534.5M1082.8 859.0L1557.1 1534.9M1079.6 859.0L1550.7 1535.2M1076.5 859.1L1544.4 1535.6M1070.1 859.2L1531.6 1536.3M1067.0 859.2L1525.2 1536.7M1063.8 859.3L1518.8 1537.1M1060.6 859.3L1512.4 1537.4M1054.3 859.4L1499.6 1538.2M1051.1 859.4L1493.2 1538.5M1047.9 859.5L1486.8 1538.9M1044.7 859.5L1480.4 1539.3M1038.3 859.6L1467.5 1540.0M1035.2 859.6L1461.1 1540.4M1032.0 859.7L1454.6 1540.8M1028.8 859.7L1448.2 1541.1M1022.4 859.8L1435.2 1541.9M1019.2 859.8L1428.8 1542.3M1016.0 859.9L1422.3 1542.6M1012.8 859.9L1415.8 1543.0M1006.4 860.0L1402.9 1543.7M1003.2 860.0L1396.4 1544.1M1000.0 860.1L1389.9 1544.5M996.8 860.1L1383.4 1544.9M990.4 860.2L1370.3 1545.6M987.2 860.2L1363.8 1546.0M984.0 860.3L1357.3 1546.4M980.8 860.3L1350.8 1546.7M974.4 860.4L1337.7 1547.5M971.2 860.5L1331.1 1547.9M968.0 860.5L1324.6 1548.2M964.7 860.5L1318.0 1548.6M958.3 860.6L1304.9 1549.4M955.1 860.7L1298.3 1549.8M951.9 860.7L1291.7 1550.1M948.7 860.7L1285.1 1550.5M942.2 860.8L1271.9 1551.3M939.0 860.9L1265.3 1551.7M935.8 860.9L1258.7 1552.0M932.5 861.0L1252.1 1552.4M926.1 861.0L1238.9 1553.2M922.8 861.1L1232.2 1553.6M919.6 861.1L1225.6 1553.9M916.4 861.2L1218.9 1554.3M909.9 861.3L1205.6 1555.1M906.7 861.3L1199.0 1555.5M903.4 861.3L1192.3 1555.9M900.2 861.4L1185.6 1556.2M893.7 861.5L1172.3 1557.0M890.5 861.5L1165.6 1557.4M887.2 861.5L1158.9 1557.8M884.0 861.6L1152.2 1558.2M877.5 861.7L1138.8 1558.9M874.2 861.7L1132.1 1559.3M871.0 861.8L1125.3 1559.7M867.7 861.8L1118.6 1560.1M861.2 861.9L1105.1 1560.9M857.9 861.9L1098.4 1561.3M854.7 862.0L1091.6 1561.7M851.4 862.0L1084.9 1562.0M844.9 862.1L1071.3 1562.8M841.6 862.1L1064.6 1563.2M838.4 862.2L1057.8 1563.6M835.1 862.2L1051.0 1564.0M828.6 862.3L1037.4 1564.8M825.3 862.3L1030.6 1565.2M822.0 862.4L1023.8 1565.6M818.8 862.4L1017.0 1565.9M812.2 862.5L1003.3 1566.7M808.9 862.6L996.5 1567.1M805.6 862.6L989.6 1567.5M802.4 862.6L982.8 1567.9M795.8 862.7L969.1 1568.7M792.5 862.8L962.2 1569.1M789.2 862.8L955.4 1569.5M785.9 862.9L948.5 1569.9M779.4 862.9L934.7 1570.7M776.1 863.0L927.8 1571.1M772.8 863.0L920.9 1571.5M769.5 863.1L914.0 1571.9M762.9 863.2L900.2 1572.7M759.6 863.2L893.3 1573.1M756.3 863.2L886.3 1573.5M753.0 863.3L879.4 1573.9M746.4 863.4L865.5 1574.7M743.1 863.4L858.6 1575.1M739.8 863.5L851.6 1575.5M736.5 863.5L844.6 1575.9M729.9 863.6L830.7 1576.7M726.6 863.6L823.7 1577.1M723.2 863.7L816.7 1577.5M719.9 863.7L809.7 1577.9M713.3 863.8L795.7 1578.7M710.0 863.8L788.7 1579.1M706.7 863.9L781.7 1579.5M703.3 863.9L774.7 1579.9M696.7 864.0L760.6 1580.7M693.4 864.1L753.5 1581.1M690.0 864.1L746.5 1581.5M686.7 864.1L739.4 1581.9M680.1 864.2L725.3 1582.7M676.7 864.3L718.2 1583.1M673.4 864.3L711.1 1583.5M670.1 864.4L704.0 1584.0M663.4 864.5L689.9 1584.8M660.0 864.5L682.7 1585.2M656.7 864.5L675.6 1585.6M653.4 864.6L668.5 1586.0M646.7 864.7L654.3 1586.8M643.3 864.7L647.1 1587.2M640.0 864.8L640.0 1587.6M636.6 864.8L632.8 1588.0M629.9 864.9L618.5 1588.9M626.6 864.9L611.3 1589.3M623.2 865.0L604.2 1589.7M619.9 865.0L597.0 1590.1M613.2 865.1L582.6 1590.9M609.8 865.1L575.4 1591.4M606.4 865.2L568.2 1591.8M603.1 865.2L561.0 1592.2M596.4 865.3L546.5 1593.0M593.0 865.4L539.3 1593.4M589.6 865.4L532.1 1593.8M586.3 865.5L524.8 1594.3M579.5 865.5L510.3 1595.1M576.1 865.6L503.0 1595.5M572.8 865.6L495.8 1595.9M569.4 865.7L488.5 1596.4M562.6 865.8L473.9 1597.2M559.3 865.8L466.6 1597.6" stroke="#cdcdcd" stroke-width="0.5" fill="none"/><path d="M2316.9 843.7L545.6 866.8M2318.9 844.4L545.4 867.6M2320.8 845.1L545.3 868.5M2322.8 845.9L545.2 869.3M2326.7 847.3L544.9 871.0M2328.7 848.0L544.8 871.8M2330.7 848.8L544.7 872.7M2332.7 849.5L544.6 873.5M2336.6 850.9L544.3 875.2M2338.6 851.7L544.2 876.1M2340.6 852.4L544.1 877.0M2342.7 853.2L543.9 877.8M2346.7 854.6L543.7 879.5M2348.7 855.4L543.5 880.4M2350.7 856.1L543.4 881.3M2352.7 856.9L543.3 882.2M2356.8 858.4L543.0 883.9M2358.9 859.1L542.9 884.8M2360.9 859.9L542.8 885.7M2363.0 860.6L542.6 886.5M2367.1 862.1L542.4 888.3M2369.2 862.9L542.2 889.2M2371.2 863.6L542.1 890.1M2373.3 864.4L542.0 891.0M2377.5 865.9L541.7 892.8M2379.6 866.7L541.6 893.7M2381.7 867.5L541.4 894.6M2383.8 868.3L541.3 895.5M2388.0 869.8L541.0 897.3M2390.1 870.6L540.9 898.2M2392.2 871.4L540.8 899.2M2394.4 872.1L540.6 900.1M2398.6 873.7L540.4 901.9M2400.8 874.5L540.2 902.9M2402.9 875.3L540.1 903.8M2405.1 876.1L539.9 904.7M2409.4 877.7L539.7 906.6M2411.6 878.5L539.5 907.5M2413.8 879.3L539.4 908.5M2415.9 880.1L539.3 909.4M2420.3 881.7L539.0 911.3M2422.5 882.5L538.8 912.3M2424.7 883.3L538.7 913.2M2426.9 884.1L538.5 914.2M2431.4 885.7L538.3 916.1M2433.6 886.5L538.1 917.1M2435.8 887.4L538.0 918.1M2438.1 888.2L537.8 919.0M2442.5 889.8L537.5 921.0M2444.8 890.7L537.4 922.0M2447.1 891.5L537.3 922.9M2449.3 892.3L537.1 923.9M2453.9 894.0L536.8 925.9M2456.2 894.8L536.7 926.9M2458.4 895.7L536.5 927.9M2460.7 896.5L536.4 928.9M2465.3 898.2L536.1 930.9M2467.6 899.0L535.9 931.9M2470.0 899.9L535.8 932.9M2472.3 900.7L535.6 933.9M2476.9 902.5L535.3 936.0M2479.3 903.3L535.2 937.0M2481.6 904.2L535.0 938.0M2484.0 905.0L534.9 939.1M2488.7 906.8L534.6 941.1M2491.1 907.6L534.4 942.2M2493.5 908.5L534.3 943.2M2495.8 909.4L534.1 944.3M2500.6 911.2L533.8 946.4M2503.0 912.0L533.6 947.4M2505.4 912.9L533.5 948.5M2507.8 913.8L533.3 949.5M2512.7 915.6L533.0 951.7M2515.1 916.5L532.9 952.7M2517.6 917.4L532.7 953.8M2520.0 918.3L532.5 954.9M2524.9 920.1L532.2 957.0M2527.4 921.0L532.1 958.1M2529.8 921.9L531.9 959.2M2532.3 922.8L531.7 960.3M2537.3 924.6L531.4 962.5M2539.8 925.5L531.2 963.6M2542.3 926.5L531.1 964.7M2544.8 927.4L530.9 965.8M2549.8 929.2L530.6 968.0M2552.4 930.2L530.4 969.2M2554.9 931.1L530.3 970.3M2557.4 932.0L530.1 971.4M2562.5 933.9L529.8 973.7M2565.1 934.8L529.6 974.8M2567.7 935.8L529.4 975.9M2570.3 936.7L529.2 977.1M2575.4 938.6L528.9 979.4M2578.0 939.6L528.7 980.5M2580.6 940.5L528.6 981.7M2583.2 941.5L528.4 982.9M2588.5 943.4L528.1 985.2M2591.1 944.4L527.9 986.4M2593.8 945.4L527.7 987.5M2596.4 946.3L527.5 988.7M2601.7 948.3L527.2 991.1M2604.4 949.3L527.0 992.3M2607.1 950.2L526.8 993.5M2609.8 951.2L526.7 994.7M2615.1 953.2L526.3 997.1M2617.8 954.2L526.1 998.3M2620.6 955.2L525.9 999.5M2623.3 956.2L525.8 1000.7M2628.7 958.2L525.4 1003.1M2631.5 959.2L525.2 1004.4M2634.2 960.2L525.0 1005.6M2637.0 961.2L524.9 1006.8M2642.5 963.3L524.5 1009.3M2645.3 964.3L524.3 1010.6M2648.1 965.3L524.1 1011.8M2650.9 966.3L523.9 1013.1M2656.5 968.4L523.6 1015.6M2659.3 969.4L523.4 1016.9M2662.2 970.5L523.2 1018.1M2665.0 971.5L523.0 1019.4M2670.7 973.6L522.6 1022.0M2673.6 974.6L522.4 1023.2M2676.4 975.7L522.2 1024.5M2679.3 976.8L522.0 1025.8M2685.1 978.9L521.7 1028.4M2688.0 979.9L521.5 1029.8M2690.9 981.0L521.3 1031.1M2693.8 982.1L521.1 1032.4M2699.7 984.2L520.7 1035.0M2702.6 985.3L520.5 1036.4M2705.6 986.4L520.3 1037.7M2708.5 987.5L520.1 1039.0M2714.5 989.7L519.7 1041.7M2717.4 990.8L519.5 1043.1M2720.4 991.9L519.3 1044.4M2723.4 993.0L519.1 1045.8M2729.5 995.2L518.7 1048.5M2732.5 996.3L518.5 1049.9M2735.5 997.4L518.3 1051.3M2738.6 998.5L518.1 1052.7M2744.7 1000.8L517.7 1055.5M2747.8 1001.9L517.5 1056.9M2750.8 1003.0L517.2 1058.3M2753.9 1004.2L517.0 1059.7M2760.1 1006.4L516.6 1062.5M2763.3 1007.6L516.4 1063.9M2766.4 1008.7L516.2 1065.3M2769.5 1009.9L516.0 1066.8M2775.8 1012.2L515.6 1069.7M2779.0 1013.4L515.3 1071.1M2782.2 1014.5L515.1 1072.6M2785.3 1015.7L514.9 1074.0M2791.7 1018.0L514.5 1076.9M2795.0 1019.2L514.3 1078.4M2798.2 1020.4L514.0 1079.9M2801.4 1021.6L513.8 1081.4M2807.9 1024.0L513.4 1084.4M2811.2 1025.2L513.2 1085.9M2814.4 1026.4L512.9 1087.4M2817.7 1027.6L512.7 1088.9M2824.3 1030.0L512.3 1091.9M2827.6 1031.2L512.0 1093.4M2830.9 1032.4L511.8 1095.0M2834.2 1033.6L511.6 1096.5M2840.9 1036.1L511.1 1099.6M2844.3 1037.3L510.9 1101.1M2847.7 1038.6L510.7 1102.7M2851.0 1039.8L510.4 1104.3M2857.8 1042.3L510.0 1107.4M2861.2 1043.6L509.8 1109.0M2864.7 1044.8L509.5 1110.6M2868.1 1046.1L509.3 1112.2M2875.0 1048.6L508.8 1115.4M2878.5 1049.9L508.6 1117.0M2881.9 1051.2L508.3 1118.6M2885.4 1052.4L508.1 1120.2M2892.4 1055.0L507.6 1123.5M2896.0 1056.3L507.4 1125.1M2899.5 1057.6L507.1 1126.7M2903.0 1058.9L506.9 1128.4M2910.1 1061.5L506.4 1131.7M2913.7 1062.8L506.1 1133.4M2917.3 1064.1L505.9 1135.0M2920.9 1065.5L505.6 1136.7M2928.1 1068.1L505.1 1140.1M2931.8 1069.5L504.9 1141.8M2935.4 1070.8L504.6 1143.5M2939.1 1072.1L504.4 1145.2M2946.4 1074.8L503.9 1148.7M2950.1 1076.2L503.6 1150.4M2953.8 1077.5L503.4 1152.1M2957.5 1078.9L503.1 1153.9M2965.0 1081.6L502.6 1157.4M2968.7 1083.0L502.3 1159.2M2972.5 1084.4L502.1 1160.9M2976.3 1085.8L501.8 1162.7M2983.8 1088.6L501.3 1166.3M2987.6 1090.0L501.0 1168.1M2991.5 1091.4L500.7 1169.9M2995.3 1092.8L500.5 1171.7M3003.0 1095.6L499.9 1175.4M3006.9 1097.0L499.7 1177.2M3010.8 1098.5L499.4 1179.0M3014.7 1099.9L499.1 1180.9M3022.5 1102.8L498.6 1184.6M3026.4 1104.2L498.3 1186.5M3030.4 1105.7L498.0 1188.3M3034.4 1107.1L497.7 1190.2M3042.3 1110.0L497.2 1194.0M3046.3 1111.5L496.9 1195.9M3050.3 1113.0L496.6 1197.8M3054.4 1114.5L496.3 1199.8M3062.5 1117.4L495.8 1203.6M3066.6 1118.9L495.5 1205.6M3070.6 1120.4L495.2 1207.5M3074.7 1121.9L494.9 1209.5M3083.0 1125.0L494.3 1213.4M3087.1 1126.5L494.0 1215.4M3091.3 1128.0L493.7 1217.4M3095.4 1129.5L493.4 1219.4M3103.8 1132.6L492.8 1223.4M3108.0 1134.2L492.5 1225.5M3112.3 1135.7L492.2 1227.5M3116.5 1137.3L491.9 1229.5M3125.0 1140.4L491.3 1233.6M3129.3 1142.0L491.0 1235.7M3133.6 1143.6L490.7 1237.8M3137.9 1145.1L490.4 1239.9M3146.6 1148.3L489.8 1244.1M3150.9 1149.9L489.5 1246.2M3155.3 1151.5L489.2 1248.3M3159.7 1153.1L488.8 1250.4M3168.5 1156.4L488.2 1254.7M3173.0 1158.0L487.9 1256.8M3177.4 1159.6L487.6 1259.0M3181.9 1161.3L487.2 1261.2M3190.9 1164.6L486.6 1265.6M3195.4 1166.2L486.3 1267.8M3199.9 1167.9L485.9 1270.0M3204.5 1169.6L485.6 1272.2M3213.6 1172.9L485.0 1276.6M3218.2 1174.6L484.6 1278.9M3222.8 1176.3L484.3 1281.2M3227.4 1178.0L484.0 1283.4M3236.7 1181.4L483.3 1288.0M3241.4 1183.1L482.9 1290.3M3246.1 1184.9L482.6 1292.6M3250.8 1186.6L482.3 1294.9M3260.3 1190.1L481.6 1299.6M3265.1 1191.8L481.2 1301.9M3269.8 1193.6L480.9 1304.3M3274.6 1195.3L480.5 1306.6M3284.3 1198.9L479.8 1311.4M3289.1 1200.7L479.5 1313.8M3294.0 1202.5L479.1 1316.2M3298.9 1204.3L478.8 1318.6M3308.7 1207.9L478.0 1323.5M3313.7 1209.7L477.7 1326.0M3318.6 1211.5L477.3 1328.4M3323.6 1213.3L476.9 1330.9M3333.6 1217.0L476.2 1335.9M3338.7 1218.8L475.8 1338.4M3343.7 1220.7L475.5 1340.9M3348.8 1222.6L475.1 1343.4M3359.0 1226.3L474.3 1348.5M3364.1 1228.2L474.0 1351.1M3369.3 1230.1L473.6 1353.7M3374.4 1232.0L473.2 1356.3M3384.8 1235.8L472.4 1361.5M3390.0 1237.7L472.0 1364.1M3395.3 1239.6L471.6 1366.8M3400.6 1241.6L471.2 1369.4M3411.2 1245.5L470.5 1374.7M3416.5 1247.4L470.1 1377.4M3421.8 1249.4L469.7 1380.1M3427.2 1251.4L469.3 1382.8M3438.0 1255.3L468.5 1388.3M3443.4 1257.3L468.0 1391.1M3448.9 1259.3L467.6 1393.8M3454.4 1261.3L467.2 1396.6M3465.4 1265.4L466.4 1402.2M3470.9 1267.4L466.0 1405.0M3476.5 1269.5L465.6 1407.9M3482.1 1271.5L465.1 1410.7M3493.3 1275.6L464.3 1416.4M3498.9 1277.7L463.9 1419.3M3504.6 1279.8L463.4 1422.2M3510.3 1281.9L463.0 1425.1M3521.8 1286.1L462.1 1431.0M3527.5 1288.2L461.7 1434.0M3533.3 1290.3L461.3 1436.9M3539.1 1292.5L460.8 1439.9M3550.8 1296.7L459.9 1445.9M3556.7 1298.9L459.5 1449.0M3562.6 1301.1L459.0 1452.0M3568.5 1303.3L458.6 1455.1M3580.5 1307.6L457.7 1461.3M3586.5 1309.8L457.2 1464.4M3592.5 1312.0L456.7 1467.5M3598.5 1314.3L456.3 1470.6M3610.7 1318.7L455.3 1477.0M3616.8 1321.0L454.9 1480.2M3623.0 1323.2L454.4 1483.4M3629.1 1325.5L453.9 1486.6M3641.6 1330.1L453.0 1493.1M3647.8 1332.4L452.5 1496.4M3654.1 1334.7L452.0 1499.6M3660.4 1337.0L451.5 1503.0M3673.1 1341.6L450.5 1509.6M3679.5 1344.0L450.0 1513.0M3685.9 1346.3L449.5 1516.3M3692.3 1348.7L449.0 1519.7M3705.3 1353.5L448.0 1526.6M3711.8 1355.9L447.5 1530.0M3718.4 1358.3L447.0 1533.5M3724.9 1360.7L446.5 1537.0M3738.2 1365.5L445.4 1544.0M3744.8 1368.0L444.9 1547.6M3751.5 1370.4L444.4 1551.1M3758.3 1372.9L443.9 1554.7M3771.8 1377.9L442.8 1561.9M3778.6 1380.4L442.2 1565.5M3785.4 1382.9L441.7 1569.2M3792.3 1385.4L441.2 1572.9M3806.1 1390.5L440.1 1580.3M3813.1 1393.0L439.5 1584.0M3820.1 1395.6L439.0 1587.8M3827.1 1398.2L438.4 1591.6" stroke="#cbcbcb" stroke-width="0.6" fill="none"/><path d="M2315.0 843.0L545.7 866.0M2324.8 846.6L545.1 870.2M2334.7 850.2L544.4 874.4M2344.7 853.9L543.8 878.7M2354.8 857.6L543.2 883.0M2365.0 861.4L542.5 887.4M2375.4 865.2L541.8 891.9M2385.9 869.0L541.2 896.4M2396.5 872.9L540.5 901.0M2407.3 876.9L539.8 905.7M2418.1 880.9L539.1 910.4M2429.1 884.9L538.4 915.2M2440.3 889.0L537.7 920.0M2451.6 893.2L537.0 924.9M2463.0 897.4L536.2 929.9M2474.6 901.6L535.5 935.0M2486.3 905.9L534.7 940.1M2498.2 910.3L533.9 945.3M2510.3 914.7L533.2 950.6M2522.4 919.2L532.4 956.0M2534.8 923.7L531.6 961.4M2547.3 928.3L530.8 966.9M2560.0 933.0L529.9 972.5M2572.8 937.7L529.1 978.2M2585.9 942.5L528.2 984.0M2599.1 947.3L527.4 989.9M2612.4 952.2L526.5 995.9M2626.0 957.2L525.6 1001.9M2639.8 962.2L524.7 1008.1M2653.7 967.4L523.7 1014.3M2667.8 972.6L522.8 1020.7M2682.2 977.8L521.8 1027.1M2696.7 983.2L520.9 1033.7M2711.5 988.6L519.9 1040.4M2726.4 994.1L518.9 1047.2M2741.6 999.6L517.9 1054.1M2757.0 1005.3L516.8 1061.1M2772.7 1011.0L515.8 1068.2M2788.5 1016.9L514.7 1075.5M2804.6 1022.8L513.6 1082.9M2821.0 1028.8L512.5 1090.4M2837.6 1034.9L511.4 1098.0M2854.4 1041.1L510.2 1105.8M2871.5 1047.3L509.0 1113.7M2888.9 1053.7L507.9 1121.8M2906.6 1060.2L506.6 1130.0M2924.5 1066.8L505.4 1138.4M2942.7 1073.5L504.1 1146.9M2961.2 1080.3L502.9 1155.6M2980.0 1087.2L501.5 1164.5M2999.2 1094.2L500.2 1173.5M3018.6 1101.3L498.8 1182.7M3038.3 1108.6L497.5 1192.1M3058.4 1116.0L496.0 1201.7M3078.8 1123.5L494.6 1211.5M3099.6 1131.1L493.1 1221.4M3120.7 1138.8L491.6 1231.6M3142.2 1146.7L490.1 1242.0M3164.1 1154.8L488.5 1252.5M3186.4 1162.9L486.9 1263.4M3209.0 1171.3L485.3 1274.4M3232.1 1179.7L483.6 1285.7M3255.6 1188.3L481.9 1297.2M3279.5 1197.1L480.2 1309.0M3303.8 1206.1L478.4 1321.1M3328.6 1215.2L476.6 1333.4M3353.9 1224.4L474.7 1346.0M3379.6 1233.9L472.8 1358.9M3405.9 1243.5L470.9 1372.1M3432.6 1253.3L468.9 1385.6M3459.9 1263.4L466.8 1399.4M3487.7 1273.6L464.7 1413.6M3516.0 1284.0L462.6 1428.1M3545.0 1294.6L460.4 1442.9M3574.5 1305.4L458.1 1458.2M3604.6 1316.5L455.8 1473.8M3635.4 1327.8L453.4 1489.8M3666.7 1339.3L451.0 1506.3M3698.8 1351.1L448.5 1523.2M3731.5 1363.1L446.0 1540.5M3765.0 1375.4L443.3 1558.3M3799.2 1387.9L440.6 1576.6M3834.1 1400.8L437.8 1595.4" stroke="#c0c0c0" stroke-width="0.8" fill="none"/><path d="M2315.0 843.0L3841.4 1403.4M2301.5 843.2L3818.3 1404.8M2288.0 843.4L3795.2 1406.1M2274.5 843.5L3771.9 1407.4M2261.0 843.7L3748.6 1408.8M2247.4 843.9L3725.2 1410.1M2233.8 844.1L3701.7 1411.5M2220.2 844.2L3678.2 1412.8M2206.5 844.4L3654.5 1414.2M2192.8 844.6L3630.8 1415.5M2179.1 844.8L3607.0 1416.9M2165.4 844.9L3583.1 1418.3M2151.7 845.1L3559.1 1419.7M2137.9 845.3L3535.0 1421.1M2124.1 845.5L3510.8 1422.5M2110.3 845.7L3486.6 1423.8M2096.4 845.8L3462.2 1425.2M2082.5 846.0L3437.8 1426.7M2068.6 846.2L3413.3 1428.1M2054.7 846.4L3388.7 1429.5M2040.7 846.6L3364.0 1430.9M2026.7 846.7L3339.2 1432.3M2012.7 846.9L3314.3 1433.8M1998.7 847.1L3289.3 1435.2M1984.6 847.3L3264.3 1436.6M1970.5 847.5L3239.1 1438.1M1956.4 847.7L3213.8 1439.5M1942.3 847.8L3188.5 1441.0M1928.1 848.0L3163.1 1442.5M1913.9 848.2L3137.5 1443.9M1899.7 848.4L3111.9 1445.4M1885.4 848.6L3086.2 1446.9M1871.2 848.8L3060.3 1448.4M1856.8 849.0L3034.4 1449.9M1842.5 849.1L3008.4 1451.4M1828.1 849.3L2982.3 1452.9M1813.8 849.5L2956.1 1454.4M1799.3 849.7L2929.8 1455.9M1784.9 849.9L2903.4 1457.4M1770.4 850.1L2876.8 1458.9M1755.9 850.3L2850.2 1460.5M1741.4 850.5L2823.5 1462.0M1726.8 850.6L2796.7 1463.5M1712.3 850.8L2769.8 1465.1M1697.6 851.0L2742.7 1466.6M1683.0 851.2L2715.6 1468.2M1668.3 851.4L2688.4 1469.8M1653.6 851.6L2661.1 1471.3M1638.9 851.8L2633.6 1472.9M1624.2 852.0L2606.1 1474.5M1609.4 852.2L2578.4 1476.1M1594.6 852.4L2550.6 1477.7M1579.7 852.6L2522.8 1479.3M1564.9 852.7L2494.8 1480.9M1550.0 852.9L2466.7 1482.5M1535.0 853.1L2438.5 1484.2M1520.1 853.3L2410.2 1485.8M1505.1 853.5L2381.8 1487.4M1490.1 853.7L2353.2 1489.1M1475.0 853.9L2324.6 1490.7M1460.0 854.1L2295.8 1492.4M1444.9 854.3L2267.0 1494.0M1429.7 854.5L2238.0 1495.7M1414.6 854.7L2208.9 1497.4M1399.4 854.9L2179.7 1499.0M1384.2 855.1L2150.3 1500.7M1368.9 855.3L2120.9 1502.4M1353.6 855.5L2091.3 1504.1M1338.3 855.7L2061.6 1505.8M1323.0 855.9L2031.8 1507.6M1307.6 856.1L2001.9 1509.3M1292.2 856.3L1971.8 1511.0M1276.8 856.5L1941.6 1512.7M1261.3 856.7L1911.4 1514.5M1245.8 856.9L1880.9 1516.2M1230.3 857.1L1850.4 1518.0M1214.7 857.3L1819.7 1519.8M1199.1 857.5L1788.9 1521.5M1183.5 857.7L1758.0 1523.3M1167.9 857.9L1727.0 1525.1M1152.2 858.1L1695.8 1526.9M1136.5 858.3L1664.5 1528.7M1120.7 858.5L1633.1 1530.5M1104.9 858.7L1601.5 1532.3M1089.1 858.9L1569.8 1534.1M1073.3 859.1L1538.0 1536.0M1057.4 859.3L1506.0 1537.8M1041.5 859.5L1473.9 1539.7M1025.6 859.7L1441.7 1541.5M1009.6 860.0L1409.3 1543.4M993.6 860.2L1376.8 1545.2M977.6 860.4L1344.2 1547.1M961.5 860.6L1311.4 1549.0M945.4 860.8L1278.5 1550.9M929.3 861.0L1245.5 1552.8M913.1 861.2L1212.3 1554.7M896.9 861.4L1179.0 1556.6M880.7 861.6L1145.5 1558.6M864.5 861.8L1111.9 1560.5M848.2 862.1L1078.1 1562.4M831.8 862.3L1044.2 1564.4M815.5 862.5L1010.2 1566.3M799.1 862.7L976.0 1568.3M782.7 862.9L941.6 1570.3M766.2 863.1L907.1 1572.3M749.7 863.3L872.5 1574.3M733.2 863.5L837.7 1576.3M716.6 863.8L802.7 1578.3M700.0 864.0L767.6 1580.3M683.4 864.2L732.4 1582.3M666.7 864.4L697.0 1584.4M650.0 864.6L661.4 1586.4M633.3 864.8L625.7 1588.5M616.5 865.1L589.8 1590.5M599.7 865.3L553.8 1592.6M582.9 865.5L517.6 1594.7M566.0 865.7L481.2 1596.8" stroke="#acacac" stroke-width="0.9" fill="none"/><path d="M1640 851L2315 843L2700 983" stroke="#9a9a9a" stroke-width="1.2" fill="none"/>
  <g stroke-linejoin="round">
  <!-- roof -->
  <path d="M1640 365L1768 366.2L1793 368.2L2000 395.2L2020 395.5L2008 396.5L1640 394Z" fill="#dcdde6"/>
  <path d="M1640 370.2L1774.8 372.2L1772.4 381.4L1640 379.8Z" fill="#cfd0da"/>
  <path d="M1640 379.8L1772.4 381.4L1801 391.8L1640 389.4Z" fill="#c5c6be"/>
  <path d="M1812 380L1918.4 393.6L1832.4 392.6Z" fill="#f3f3f3"/>
  <path d="M1797 371L2000 395.2L1918.4 393.6L1812 380Z" fill="#d2d2d5"/>
  <path d="M1640 365L1768 366.2L1793 368.2L2000 395.2L2020 395.5" stroke="#1a1a1a" stroke-width="2" fill="none"/>
  <path d="M1640 370.2L1774.8 372.2M1640 379.8L1772.4 381.4M1640 389.4L1850 392.6M1786 371.8L1801 391.8M1790.8 371L1817 392M1812.4 380L1832.4 392M1812 380L1918.4 393.6M1775 370.5L1772 381M1782 370.5L1780 381M1793 368.2L1800 372" stroke="#1e1e1e" stroke-width="1.1" fill="none"/>
  <path d="M1795.6 371L1826 392" stroke="#1a1a1a" stroke-width="2.2" fill="none"/>
  <!-- lower piece -->
  <path d="M1640 984L1711 984L1707 1130Q1706 1145 1692 1145L1640 1145Z" fill="#c9cad5"/>
  <path d="M1640 984L1711 984L1707 1130Q1706 1145 1692 1145L1640 1145" fill="none" stroke="#555" stroke-width="0.8"/>
  <path d="M1688 986L1685 1125Q1684 1132 1676 1133L1640 1134M1701 986L1697 1128Q1696 1145 1688 1145" stroke="#1e1e1e" stroke-width="1.3" fill="none"/>
  <path d="M1640 1122L1674 1122M1707 1116L1708 1133" stroke="#1e1e1e" stroke-width="1.2" fill="none"/>
  <!-- main body -->
  <path d="M1640 393L2008 396Q2040 394 2054 411.4L2313 561.4Q2324 566 2323 578L2313 756Q2311 767 2296 767L1780 772Q1776.5 773 1776.5 779.5L1770 972Q1769 984 1756 984L1640 985Z" fill="url(#bodyg)" stroke="#3a3a3a" stroke-width="0.9"/>
  <!-- top rail lines -->
  <path d="M1640 409L2012 413.7M1640 417L2012 421.8M1640 420.5L2012 425.6" stroke="#1e1e1e" stroke-width="1.2" fill="none"/>
  <path d="M2009 396Q2014 410 2012.5 427M2012 413.7L2032.6 413.7M2012 427L2027 427L2041.8 436M2029 396Q2033 404 2032.6 413.7M2035 399Q2038 406 2032.6 413.7L2048.4 423.5M2053 410Q2052 420 2048.4 423.5L2041.8 436" stroke="#1e1e1e" stroke-width="1.2" fill="none"/>
  <path d="M2048.4 424L2299 570.6M2044 432.2L2296 577.6M2042 435.5L2295 581.5" stroke="#1e1e1e" stroke-width="1.2" fill="none"/>
  <path d="M2303.6 555Q2303 570 2295 581M2318 563.5Q2321 580 2314.6 596M2314 578L2323 578M2300 596L2323 596M2295 581Q2300 585 2300 596" stroke="#1e1e1e" stroke-width="1.2" fill="none"/>
  <path d="M2300 596L2291.7 733M2305 596L2296 733M2313 596L2303.6 760" stroke="#1e1e1e" stroke-width="1.2" fill="none"/>
  <path d="M2291.7 733Q2291 741 2284 741.7M2296 733L2313 733M2284 746Q2284 758 2275.6 767M2303.6 760Q2303 766 2296 767" stroke="#1e1e1e" stroke-width="1.2" fill="none"/>
  <path d="M2284 741.7L1790 745M2262 746L1792 749M2313 754.4L1792 758" stroke="#1e1e1e" stroke-width="1.2" fill="none"/>
  <!-- inner notch & lower body rails -->
  <path d="M1790 743.7Q1756 745 1753.6 777.7L1746.6 952M1790 757.5Q1769 759 1767.3 778.6L1760 950M1757.2 778L1750.8 949M1756 778L1778.3 778" stroke="#1e1e1e" stroke-width="1.2" fill="none"/>
  <path d="M1746.6 952Q1745 957 1738 958.5L1640 960M1640 964L1738 963.7M1640 972.5L1770 970M1738 958.5Q1740 975 1734.3 984M1760 950Q1761 975 1755.4 984M1750.8 949L1771 948" stroke="#1e1e1e" stroke-width="1.2" fill="none"/>
  <circle cx="1766" cy="825" r="2.4" fill="none" stroke="#222" stroke-width="1.1"/>
  <circle cx="1764" cy="866" r="2.4" fill="none" stroke="#222" stroke-width="1.1"/>
  <circle cx="1763" cy="907" r="2.4" fill="none" stroke="#222" stroke-width="1.1"/>
  <!-- window -->
  <path d="M1914 552L2105 553L2099 673L1908 673Z" fill="#c5c6d3" stroke="#1e1e1e" stroke-width="1.3"/>
  <path d="M1919 559L2092 561L2088 663L1915 662Z" fill="#d3d4c9" stroke="#1e1e1e" stroke-width="1.3"/>
  <path d="M1919 560L2025 561L2024 606L1917 606Z" fill="#a3a4a0"/>
  <path d="M2033 562L2086 563L2086 627L2033 606Z" fill="#f3f3f3"/>
  <path d="M2025 561L2024 606M2029 562L2029 606M2033 562L2033 606" stroke="#1e1e1e" stroke-width="1.2"/>
  <path d="M1917 606L2033 606L2086 627" stroke="#1e1e1e" stroke-width="1" fill="none"/>
  <path d="M2086 562L2083 662" stroke="#1e1e1e" stroke-width="1.2"/>
  <path d="M2092 561L2099 553M2088 663L2099 672" stroke="#1e1e1e" stroke-width="0.8"/>
</g>

</svg>

<div class="a" style="left:0;top:0;width:556px;height:160px;background:#111"></div>
<div class="a" style="left:0;top:1424px;width:556px;height:50px;background:#111"></div>

<div id="ppt" class="a">
  <div id="ribbon" class="a"></div>
  <div id="slide" class="a"></div>
  <div id="status" class="a"></div>
  <!-- title bar -->
  <svg class="a" style="left:0;top:0" width="100" height="40">
    <path d="M2 19l3 3 3-3" stroke="#8a8a8a" stroke-width="1.2" fill="none"/>
    <path d="M35 16a7 7 0 1 1-7 6" stroke="#9a9a9a" stroke-width="1.4" fill="none"/><path d="M26 14l3 5 4-4z" fill="#9a9a9a"/>
    <rect x="49" y="15" width="13" height="9" fill="none" stroke="#9a9a9a" stroke-width="1.3"/><path d="M55.5 24v6M51 30h9M53 18l4 2-4 2z" stroke="#9a9a9a" stroke-width="1.2" fill="none"/>
    <path d="M78 19h7M78 23l3.5 3 3.5-3" stroke="#8a8a8a" stroke-width="1.2" fill="none"/>
  </svg>
  <div class="g" style="left:108px;top:17px;font-size:10.5px;color:#717171">CAMPER WINDOW AND VENT LOCATION.pptx &nbsp;•&nbsp; Saved <span style="font-size:9px">⌄</span></div>
  <div class="a" style="left:575px;top:8px;width:338px;height:29px;border:1px solid #3a3a3a;border-radius:4px;background:#1d1d1d"></div>
  <svg class="a" style="left:586px;top:13px" width="20" height="20"><circle cx="11" cy="8" r="4.5" stroke="#8a8a8a" stroke-width="1.3" fill="none"/><path d="M8 11.5l-5 5" stroke="#8a8a8a" stroke-width="1.4"/></svg>
  <div class="g" style="left:613px;top:16px;font-size:12px;color:#8a8a8a">Search</div>
  <svg class="a" style="left:1488px;top:10px" width="24" height="24"><defs><clipPath id="av"><circle cx="12" cy="12" r="11.5"/></clipPath></defs><g clip-path="url(#av)"><rect width="24" height="24" fill="#2a2a2a"/><rect width="24" height="11" fill="#e8e8e8"/><ellipse cx="12" cy="11" rx="5.5" ry="7" fill="#8a8a8a"/><path d="M7.5 9h9" stroke="#3a3a3a" stroke-width="1.2"/><path d="M9 15q3 3 6 0" fill="#5a5a5a"/><path d="M0 24q12-10 24 0z" fill="#1e1e1e"/></g></svg>
  <div class="a" style="left:1538px;top:21px;width:10px;height:1px;background:#777"></div>
  <div class="a" style="left:1583px;top:17px;width:10px;height:11px;border:1px solid #777;border-radius:1px"></div>
  <svg class="a" style="left:1624px;top:14px" width="16" height="16"><path d="M2 3l11 11M13 3l-11 11" stroke="#777" stroke-width="1.2"/></svg>
  <!-- tabs -->
  <div class="w" style="left:-1px;top:52px;font-size:12.5px">sign</div>
  <div class="w" style="left:37px;top:52px;font-size:12.5px">Transitions</div>
  <div class="w" style="left:113px;top:52px;font-size:12.5px">Animations</div>
  <div class="w" style="left:193px;top:52px;font-size:12.5px">Slide Show</div>
  <div class="w" style="left:271px;top:52px;font-size:12.5px">Record</div>
  <div class="w" style="left:328px;top:52px;font-size:12.5px">Review</div>
  <div class="w" style="left:385px;top:52px;font-size:12.5px">View</div>
  <div class="w" style="left:429px;top:52px;font-size:12.5px">Help</div>
  <div class="w" style="left:472px;top:52px;font-size:12.5px">Acrobat</div>
  <div class="a" style="left:1479px;top:47px;width:64px;height:22px;border:1px solid #4a4a4a;border-radius:4px;background:#262626"></div>
  <div class="a" style="left:1484px;top:52px;width:11px;height:11px;border:1.5px solid #ddd;border-radius:50%"></div>
  <div class="a" style="left:1487px;top:55px;width:5px;height:5px;background:#ddd;border-radius:50%"></div>
  <div class="w" style="left:1498px;top:52px;font-size:12px">Record</div>
  <div class="a" style="left:1551px;top:47px;width:19px;height:22px;border:1px solid #4a4a4a;border-radius:4px;background:#262626"></div>
  <svg class="a" style="left:1553px;top:50px" width="16" height="16"><path d="M3 3h10v7h-6l-3 3v-3h-1z" stroke="#ddd" stroke-width="1.1" fill="none"/></svg>
  <div class="a" style="left:1577px;top:47px;width:66px;height:22px;border-radius:4px;background:#d96e3f"></div>
  <svg class="a" style="left:1580px;top:50px" width="16" height="16"><path d="M3 7v6h9v-3M6 10q1-5 6-5v-2l3 3-3 3v-2q-3 0-6 3" stroke="#2a2a2a" stroke-width="1.1" fill="none"/></svg>
  <div class="w" style="left:1596px;top:52px;font-size:12px;color:#1f1f1f">Share</div>
  <div class="w" style="left:1633px;top:52px;font-size:9px;color:#1f1f1f">⌄</div>
  <!-- ribbon groups -->
  <div class="sep" style="left:156px;top:77px;height:81px"></div>
  <div class="sep" style="left:441px;top:77px;height:81px"></div>
  <div class="sep" style="left:757px;top:77px;height:81px"></div>
  <div class="sep" style="left:1126px;top:77px;height:81px"></div>
  <div class="sep" style="left:1232px;top:77px;height:81px"></div>
  <div class="sep" style="left:1303px;top:77px;height:81px"></div>
  <div class="sep" style="left:1356px;top:77px;height:81px"></div>
  <div class="sep" style="left:1423px;top:77px;height:81px"></div>
  <div class="sep" style="left:1480px;top:77px;height:81px"></div>
  <div class="sep" style="left:1582px;top:77px;height:81px"></div>
  <div class="gl" style="left:58px;top:149px;font-size:10px">Slides</div>
  <div class="gl" style="left:282px;top:149px;font-size:10px">Font</div>
  <div class="gl" style="left:568px;top:149px;font-size:10px">Paragraph</div>
  <div class="gl" style="left:917px;top:149px;font-size:10px">Drawing</div>
  <div class="gl" style="left:1164px;top:149px;font-size:10px">Editing</div>
  <div class="gl" style="left:1234px;top:149px;font-size:10px">Adobe Acrobat</div>
  <div class="gl" style="left:1318px;top:149px;font-size:10px">Voice</div>
  <div class="gl" style="left:1369px;top:149px;font-size:10px">Sensitivity</div>
  <div class="gl" style="left:1434px;top:149px;font-size:10px">Add-ins</div>
  <!-- slides group -->
  <svg class="a" style="left:0;top:72px" width="1646" height="90">
    <g fill="none" stroke="#9a9a9a" stroke-width="1.3">
      <rect x="-2" y="9" width="27" height="21"/><path d="M-2 20h27M12 20v10"/>
      <rect x="41" y="9" width="24" height="22"/><rect x="44" y="12" width="20" height="17"/>
      <rect x="78" y="8" width="14" height="11"/><rect x="78" y="30" width="14" height="11"/><rect x="78" y="53" width="14" height="11"/>
      <path d="M81 11h3v5h-3zM86 11h3v5h-3z"/><path d="M81 56h8v5h-8z"/>
    </g>
    <path d="M4 5v14M-3 12h14" stroke="#5dbb63" stroke-width="1.5"/>
    <circle cx="57" cy="22" r="6" fill="none" stroke="#4b9fd5" stroke-width="1.5"/><path d="M61 26l5 5" stroke="#4b9fd5" stroke-width="1.6"/>
    <path d="M78 53h14v2h-14z" fill="#5dbb63"/>
    <path d="M79 29a4 4 0 0 1 7-1" stroke="#4b9fd5" stroke-width="1.3" fill="none"/>
    <!-- font group -->
    <rect x="165.5" y="10.5" width="151" height="21" rx="3" fill="#1f1f1f" stroke="#3b3b3b"/>
    <path d="M307 19l3 3 3-3" stroke="#777" fill="none"/>
    <rect x="319.5" y="10.5" width="41" height="21" rx="3" fill="#1f1f1f" stroke="#3b3b3b"/>
    <path d="M351 19l3 3 3-3" stroke="#777" fill="none"/>
    <path d="M410.5 10v18M357.5 100M358.5 42v17" stroke="#4a4a4a"/>
    <path d="M421 10l-6 15M421 10l6 12M417 20h8M424 24l6-6 3 3-6 6z" stroke="#9a9a9a" stroke-width="1.2" fill="none"/>
    
    <path d="M371 58l8-10 3 3-8 10zM366 64h14" stroke="#9a9a9a" stroke-width="1.3" fill="none"/>
    <path d="M401 64h14" stroke="#9a9a9a" stroke-width="2"/>
    <path d="M385 50l2 2 2-2M308 50l2 2 2-2M346 50l2 2 2-2M424 50l2 2 2-2" stroke="#777" fill="none"/>
    <path d="M431 152M431 152" stroke="#777"/>
    <path d="M431 80h5v5M433 82l3 3" stroke="#666" fill="none"/>
    <!-- paragraph group -->
    <g stroke="#9a9a9a" stroke-width="1.3" fill="none">
      <path d="M457 13h10M457 18h10M457 23h10"/><circle cx="453" cy="13" r="1"/><circle cx="453" cy="18" r="1"/><circle cx="453" cy="23" r="1"/>
      <path d="M494 13h10M494 18h10M494 23h10M489 11v4M489 16v4M489 21v4"/>
      <path d="M531 12h13M537 16h7M537 20h7M531 24h13M535 16l-3 2 3 2"/>
      <path d="M554 12h13M560 16h7M560 20h7M554 24h13M555 16l3 2-3 2"/>
      <path d="M585 12h8M585 17h8M585 22h8M580 11v13M578 13l2-2 2 2M578 22l2 2 2-2"/>
      <path d="M453 45h14M453 49h10M453 53h14M453 57h10"/>
      <path d="M476 45h14M479 49h8M476 53h14M479 57h8"/>
      <path d="M500 45h14M504 49h10M500 53h14M504 57h10"/>
      <path d="M523 45h14M523 49h14M523 53h14M523 57h14"/>
      <path d="M550 48h5M558 48h5M550 52h5M558 52h5"/>
      <path d="M543.5 42v18M576.5 10v18M523.5 10v18"/>
      <path d="M619 10v15M617 23l2 2 2-2M624 11l2 6 2-6"/>
      <path d="M617 32h14v12h-14zM624 34v8"/>
      <path d="M619 56h6v8h-6zM625 60h6v5h-6z"/>
    </g>
    <path d="M474 19l2 2 2-2M512 19l2 2 2-2M600 19l2 2 2-2M569 52l2 2 2-2M708 16l2 2 2-2M688 39l2 2 2-2M736 63l2 2 2-2" stroke="#6f6f6f" fill="none"/>
    <path d="M746 80h5v5M748 82l3 3" stroke="#666" fill="none"/>
    <!-- drawing gallery -->
    <rect x="765.5" y="3.5" width="155" height="68" rx="4" fill="none" stroke="#474747"/>
    <path d="M899.5 4v67" stroke="#474747"/>
    <path d="M906 36l4 4 4-4M906 32h8" stroke="#bbb" fill="none"/>
    <g stroke="#c8c8c8" stroke-width="1.2" fill="none">
      <rect x="772" y="10" width="12" height="11" stroke="#4b9fd5"/><path d="M775 18l3-6 3 6M776 16h4" stroke="#4b9fd5"/>
      <path d="M794 10l12 11M816 10l12 11"/><path d="M828 21l-4-1 3-3z"/>
      <rect x="838" y="11" width="13" height="10"/><ellipse cx="866" cy="16" rx="7" ry="5"/><rect x="881" y="11" width="13" height="10" rx="3"/>
      <path d="M772 44l6-11 6 11z"/><path d="M794 34h5v10h7"/><path d="M816 34h5v10h6"/><path d="M838 36h8v-3l5 5-5 5v-3h-8z"/><path d="M863 33h6v6h3l-6 6-6-6h3z"/><path d="M881 34h8l5 5v6h-13z"/>
      <path d="M775 66q-5-8 3-10q6 0 0 6q-4 4 6 2"/><path d="M794 56q10 0 10 10"/><path d="M816 66q4-12 6-8q2 4 6-2"/><path d="M846 56q-3 0-3 4q0 2-2 3q2 1 2 3q0 4 3 4"/><path d="M863 56q3 0 3 4q0 2 2 3q-2 1-2 3q0 4-3 4"/><path d="M888 55l2 5h5l-4 3 2 5-5-3-5 3 2-5-4-3h5z"/>
    </g>
    <!-- arrange -->
    <rect x="936" y="8" width="12" height="12" fill="none" stroke="#cfcfcf" stroke-width="1.2"/>
    <rect x="942" y="14" width="14" height="14" fill="#e3a23b"/><rect x="948" y="20" width="12" height="12" fill="#2c2c2c" stroke="#cfcfcf" stroke-width="1.2"/>
    <path d="M944 63l3 3 3-3" stroke="#ccc" fill="none"/>
    <!-- quick styles -->
    <rect x="978" y="7" width="26" height="26" rx="3" fill="none" stroke="#6a6a6a" stroke-width="1.2"/><path d="M992 30l12-14" stroke="#6a6a6a" stroke-width="2"/>
    <g stroke="#767676" stroke-width="1.2" fill="none"><path d="M1019 16l6-6 6 6-6 6zM1019 22h14M1022 10l-2-3"/><path d="M1019 46l10-10 3 3-10 10zM1019 45h14"/><path d="M1019 68l6-6 8 3-6 6z"/></g>
    <path d="M1086 15l2 2 2-2M1108 38l2 2 2-2M1105 62l2 2 2-2M988 62l2 2 2-2" stroke="#6f6f6f" fill="none"/>
    <path d="M1116 80h5v5M1118 82l3 3" stroke="#666" fill="none"/>
    <!-- editing -->
    <g stroke="#cfcfcf" stroke-width="1.2" fill="none"><circle cx="1148" cy="12" r="5"/><path d="M1145 16l-5 6"/>
      <path d="M1140 63l0-13 9 8h-5z"/></g>
    <text x="1141" y="39" font-size="9" fill="#c86dd7" font-family="Liberation Sans">b</text><text x="1140" y="46" font-size="9" fill="#4b9fd5" font-family="Liberation Sans">c</text>
    <path d="M1212 36l3 3 3-3M1189 62l2 2 2-2" stroke="#ccc" fill="none"/>
    <!-- acrobat -->
    <path d="M1260 8h14l7 7v19h-21z" fill="none" stroke="#4d6fb0" stroke-width="1.3"/><path d="M1266 24q4-10 3-12q-3 2 0 8q3 4 6 3" stroke="#4d6fb0" stroke-width="1.2" fill="none"/>
    <path d="M1278 30l5-5" stroke="#4d6fb0" stroke-width="2"/>
    <!-- dictate -->
    <rect x="1324" y="6" width="11" height="19" rx="5.5" fill="#4a90d9"/><path d="M1320 18a9.5 9.5 0 0 0 19 0M1329.5 28v5" stroke="#9a9a9a" stroke-width="1.3" fill="none"/>
    <path d="M1326 62l3 3 3-3" stroke="#ccc" fill="none"/>
    <!-- sensitivity -->
    <path d="M1381 11h16v22h-16z" fill="none" stroke="#6a6a6a" stroke-width="1.3"/><path d="M1387 25l12-14 4 4-12 14z" fill="#2c2c2c" stroke="#6a6a6a" stroke-width="1.2"/>
    <path d="M1387 61l3 3 3-3" stroke="#6a6a6a" fill="none"/>
    <!-- add-ins -->
    <g fill="none" stroke="#c8452a" stroke-width="1.4"><rect x="1439" y="8" width="11" height="11"/><rect x="1453" y="8" width="11" height="11"/><rect x="1439" y="22" width="11" height="11"/><rect x="1453" y="22" width="11" height="11"/></g>
    <!-- designer -->
    <rect x="1499" y="13" width="25" height="19" fill="none" stroke="#aaa" stroke-width="1.5"/><path d="M1499 19h25M1515 19v13" stroke="#aaa" stroke-width="1.3"/>
    <path d="M1503 4l-5 10h4l-3 8 8-11h-4l3-7z" fill="#f0b53a"/>
    <!-- copilot -->
    <defs><linearGradient id="cop" x1="0" y1="0" x2="1" y2="1"><stop offset="0" stop-color="#3bb8f0"/><stop offset=".4" stop-color="#39d17a"/><stop offset=".6" stop-color="#f5b632"/><stop offset="1" stop-color="#d84fd8"/></linearGradient></defs>
    <path d="M1550 10q4-5 9-3l8 2q5 2 3 8l-4 13q-2 5-8 4l-8-2q-6-2-4-8z" fill="url(#cop)"/>
    <path d="M1556 12l-4 15q2 3 6 3l4-16z" fill="#2c2c2c" opacity=".55"/>
    <path d="M1628 76l4.5 4.5 4.5-4.5" stroke="#ddd" stroke-width="1.3" fill="none"/>
  </svg>
  <div class="w" style="left:3px;top:111px;font-size:11px">New</div>
  <div class="w" style="left:-4px;top:126px;font-size:11px">Slide <span style="font-size:8px">⌄</span></div>
  <div class="w" style="left:38px;top:111px;font-size:11px">Reuse</div>
  <div class="w" style="left:38px;top:126px;font-size:11px">Slides</div>
  <div class="w" style="left:95px;top:81px;font-size:11px">Layout <span style="font-size:8px">⌄</span></div>
  <div class="w" style="left:95px;top:104px;font-size:10.5px">Reset</div>
  <div class="w" style="left:95px;top:128px;font-size:11px">Section <span style="font-size:8px">⌄</span></div>
  <div class="g" style="left:322px;top:87px;font-size:11px;color:#6c6c6c">10</div>
  <div class="w" style="left:366px;top:85px;font-size:14px;color:#a8a8a8">A<span style="font-size:7px;vertical-align:top">^</span></div>
  <div class="w" style="left:391px;top:87px;font-size:12px;color:#a8a8a8">A<span style="font-size:7px;vertical-align:top">ˇ</span></div>
  <div class="w" style="left:171px;top:116px;font-size:12px;color:#aaa;font-weight:bold">B</div>
  <div class="w" style="left:195px;top:116px;font-size:12px;color:#aaa;font-style:italic;font-family:'Liberation Serif'">I</div>
  <div class="w" style="left:217px;top:116px;font-size:12px;color:#aaa;text-decoration:underline">U</div>
  <div class="w" style="left:240px;top:116px;font-size:13px;color:#aaa;font-weight:bold">S</div>
  <div class="w" style="left:262px;top:117px;font-size:11px;color:#999;text-decoration:line-through">ab</div>
  <div class="w" style="left:285px;top:114px;font-size:11px;color:#aaa">AV</div>
  <div class="w" style="left:323px;top:116px;font-size:12px;color:#aaa">Aa</div>
  <div class="w" style="left:403px;top:114px;font-size:12px;color:#aaa">A</div>
  <div class="g" style="left:635px;top:80px;font-size:11px;color:#727272">Text Direction</div>
  <div class="g" style="left:635px;top:104px;font-size:11px;color:#727272">Align Text</div>
  <div class="g" style="left:635px;top:128px;font-size:11px;color:#727272">Convert to SmartArt</div>
  <div class="w" style="left:928px;top:111px;font-size:11px">Arrange</div>
  <div class="g" style="left:978px;top:111px;font-size:11px;color:#6a6a6a">Quick</div>
  <div class="g" style="left:972px;top:126px;font-size:11px;color:#6a6a6a">Styles</div>
  <div class="g" style="left:1035px;top:80px;font-size:11px;color:#727272">Shape Fill</div>
  <div class="g" style="left:1035px;top:104px;font-size:11px;color:#727272">Shape Outline</div>
  <div class="g" style="left:1035px;top:128px;font-size:11px;color:#727272">Shape Effects</div>
  <div class="w" style="left:1156px;top:80px;font-size:11px">Find</div>
  <div class="w" style="left:1156px;top:104px;font-size:11px">Replace</div>
  <div class="w" style="left:1156px;top:128px;font-size:11px">Select <span style="font-size:8px">⌄</span></div>
  <div class="w" style="left:1251px;top:111px;font-size:11px">Create</div>
  <div class="w" style="left:1253px;top:126px;font-size:11px">a PDF</div>
  <div class="w" style="left:1311px;top:112px;font-size:11px">Dictate</div>
  <div class="g" style="left:1366px;top:111px;font-size:10.5px;color:#6a6a6a">Sensitivity</div>
  <div class="w" style="left:1433px;top:111px;font-size:11px">Add-ins</div>
  <div class="w" style="left:1489px;top:111px;font-size:11px">Designer</div>
  <div class="w" style="left:1537px;top:111px;font-size:11px">Copilot</div>
  <!-- status bar content -->
  <div class="w" style="left:-1px;top:1249px;font-size:10px;color:#ddd">Investigate</div>
  <svg class="a" style="left:1240px;top:1242px" width="414" height="22">
    <path d="M14 8h12M14 12h12M14 16h12M17 6l3-3 3 3" stroke="#cfcfcf" stroke-width="1.1" fill="none"/>
    <rect x="72" y="1" width="38" height="20" fill="#2d2d2d"/>
    <g stroke="#cfcfcf" stroke-width="1.1" fill="none">
      <rect x="84" y="6" width="12" height="10"/><path d="M87 6v10M89 8h5v3h-5z"/>
      <rect x="121" y="6" width="5" height="4"/><rect x="128" y="6" width="5" height="4"/><rect x="121" y="12" width="5" height="4"/><rect x="128" y="12" width="5" height="4"/>
      <path d="M157 6h12v10h-12zM163 6v10M159 9h2M165 9h2"/>
      <path d="M193 6h12v6h-12zM199 12v4M195 16h8"/>
      <path d="M224 11h7M335 11h7M338.5 7.5v7"/>
    </g>
    <path d="M235 11.5h92" stroke="#777" stroke-width="1"/>
    <rect x="284" y="6" width="4" height="11" fill="#aaa"/><path d="M281 9v5" stroke="#999"/>
    <path d="M386 11l3-3v6zM400 11l-3-3v6zM393 4l-3 3h6zM393 18l-3-3h6z" fill="#cfcfcf"/><rect x="390" y="8" width="6" height="6" fill="none" stroke="#cfcfcf"/>
  </svg>
  <div class="w" style="left:1268px;top:1249px;font-size:10px;color:#ddd">Notes</div>
  <div class="w" style="left:1591px;top:1249px;font-size:9.5px;color:#ddd">140%</div>

</div>
<svg class="a" style="left:0;top:0" width="1628" height="1474" font-family="Liberation Sans">
<defs><clipPath id="slc"><rect x="0" y="399" width="1628" height="926"/></clipPath></defs>
<g clip-path="url(#slc)">
<rect x="98.5" y="413.5" width="1412" height="904" fill="none" stroke="#c4c4c4" stroke-width="1"/>
<path d="M98.5 448.5H558.5V413.5" fill="none" stroke="#c4c4c4" stroke-width="1"/>
<text x="330.0" y="423.5" font-size="6.2" font-weight="bold" fill="#222" text-anchor="middle" textLength="106.0" lengthAdjust="spacingAndGlyphs" >PROPRIETARY AND CONFIDENTIAL</text>
<text x="106.0" y="434.5" font-size="5.8" font-weight="normal" fill="#444" text-anchor="start" textLength="355.0" lengthAdjust="spacingAndGlyphs" >THE INFORMATION CONTAINED IN THIS DRAWING IS THE SOLE PROPERTY OF CANADIAN COMMERCIAL VEHICLES.</text>
<text x="106.0" y="443.0" font-size="5.8" font-weight="normal" fill="#444" text-anchor="start" textLength="430.0" lengthAdjust="spacingAndGlyphs" >ANY REPRODUCTION IN PART OR AS A WHOLE WITHOUT THE WRITTEN PERMISSION OF CANADIAN COMMERCIAL VEHICLES IS PROHIBITED.</text>
<text x="716.0" y="450.5" font-size="22" font-weight="bold" fill="#111" text-anchor="start" textLength="321.0" lengthAdjust="spacingAndGlyphs" >STANDARD SLIDE-IN CAMPER</text>
<text x="649.0" y="478.0" font-size="22" font-weight="bold" fill="#111" text-anchor="start" textLength="456.0" lengthAdjust="spacingAndGlyphs" >WINDOWS/DOOR/VENT LOCATION SHEET</text>
<rect x="137.5" y="477" width="455.5" height="111" fill="#e9fa17" stroke="#0a0a0a" stroke-width="3"/>
<text x="187.7" y="501.6" font-size="19" font-weight="normal" fill="#151515" text-anchor="start" textLength="247.3" lengthAdjust="spacingAndGlyphs" >CAMPER TYPE 1 (6.5FT BED)</text>
<rect x="152" y="488.1" width="11" height="11" fill="none" stroke="#111" stroke-width="2"/>
<path d="M154 501.1h10v-10" stroke="#111" stroke-width="2" fill="none"/>
<text x="187.7" y="525.8" font-size="19" font-weight="normal" fill="#151515" text-anchor="start" textLength="230.5" lengthAdjust="spacingAndGlyphs" >CAMPER TYPE 2 (8FT BED)</text>
<rect x="152" y="512.3" width="11" height="11" fill="none" stroke="#111" stroke-width="2"/>
<path d="M154 525.3h10v-10" stroke="#111" stroke-width="2" fill="none"/>
<text x="187.7" y="550.6" font-size="19" font-weight="normal" fill="#151515" text-anchor="start" textLength="387.6" lengthAdjust="spacingAndGlyphs" >CAMPER TYPE 3 (TOYOTA TACOMA 5FT BED)</text>
<rect x="152" y="537.1" width="11" height="11" fill="none" stroke="#111" stroke-width="2"/>
<path d="M154 550.1h10v-10" stroke="#111" stroke-width="2" fill="none"/>
<text x="187.7" y="575.3" font-size="19" font-weight="normal" fill="#151515" text-anchor="start" textLength="387.6" lengthAdjust="spacingAndGlyphs" >CAMPER TYPE 4 (TOYOTA TACOMA 6FT BED)</text>
<rect x="152" y="561.8" width="11" height="11" fill="none" stroke="#111" stroke-width="2"/>
<path d="M154 574.8h10v-10" stroke="#111" stroke-width="2" fill="none"/>
<path d="M153.5 562.8l9 10M162.5 562.8l-9 10" stroke="#111" stroke-width="2"/>
<text x="506.6" y="645.0" font-size="19.5" font-weight="bold" fill="#111" text-anchor="end" textLength="223.6" lengthAdjust="spacingAndGlyphs" >SIDE WALL WINDOW SIZE:</text>
<text x="512.4" y="645.0" font-size="19.5" font-weight="normal" fill="#1a1a1a" text-anchor="start" textLength="277.0" lengthAdjust="spacingAndGlyphs" >700mm (27.5&quot;) X 500mm (19.7&quot;)</text>
<text x="506.6" y="667.3" font-size="19.5" font-weight="bold" fill="#111" text-anchor="end" textLength="180.0" lengthAdjust="spacingAndGlyphs" >BUNK WINDOW SIZE:</text>
<text x="512.4" y="667.3" font-size="19.5" font-weight="normal" fill="#1a1a1a" text-anchor="start" textLength="277.0" lengthAdjust="spacingAndGlyphs" >500mm (19.7&quot;) X 300mm (11.8&quot;)</text>
<text x="506.6" y="689.5" font-size="19.5" font-weight="bold" fill="#111" text-anchor="end" textLength="100.3" lengthAdjust="spacingAndGlyphs" >DOOR SIZE:</text>
<text x="512.4" y="689.5" font-size="19.5" font-weight="normal" fill="#1a1a1a" text-anchor="start" textLength="287.3" lengthAdjust="spacingAndGlyphs" >620mm (24.4&quot;) X 1750mm (68.9&quot;)</text>
<text x="506.6" y="711.6" font-size="19.5" font-weight="bold" fill="#111" text-anchor="end" textLength="145.6" lengthAdjust="spacingAndGlyphs" >ROOF VENT SIZE:</text>
<text x="512.4" y="711.6" font-size="19.5" font-weight="normal" fill="#1a1a1a" text-anchor="start" textLength="75.6" lengthAdjust="spacingAndGlyphs" >14&quot; X 14&quot;</text>
<rect x="1058.4" y="563.6" width="350.6" height="225.4" rx="4.0" fill="none" stroke="#1e1e1e" stroke-width="1.3"/>
<rect x="1066.5" y="572.5" width="334.5" height="208.5" rx="0.0" fill="none" stroke="#1e1e1e" stroke-width="1.3"/>
<path d="M1319.5 563.6L1319.5 789.0" stroke="#1e1e1e" stroke-width="1.3" fill="none"/>
<path d="M1331.0 563.6L1331.0 789.0" stroke="#1e1e1e" stroke-width="1.3" fill="none"/>
<path d="M1058.4 572.5L1066.5 572.5" stroke="#1e1e1e" stroke-width="1" fill="none"/>
<path d="M1058.4 781.0L1066.5 781.0" stroke="#1e1e1e" stroke-width="1" fill="none"/>
<path d="M1319.5 572.5L1331.0 572.5" stroke="#1e1e1e" stroke-width="1" fill="none"/>
<path d="M1319.5 781.0L1331.0 781.0" stroke="#1e1e1e" stroke-width="1" fill="none"/>
<path d="M1401.0 572.5L1409.0 572.5" stroke="#1e1e1e" stroke-width="1" fill="none"/>
<path d="M1401.0 781.0L1409.0 781.0" stroke="#1e1e1e" stroke-width="1" fill="none"/>
<rect x="1066.5" y="774.0" width="6.5" height="7.0" rx="1.0" fill="none" stroke="#1e1e1e" stroke-width="1"/>
<rect x="1214.5" y="657.6" width="38.3" height="37.9" rx="0.0" fill="none" stroke="#1e1e1e" stroke-width="1.3"/>
<path d="M1243.5 657.6L1243.5 695.5" stroke="#1e1e1e" stroke-width="1.2" fill="none"/>
<path d="M1058.4 520.0L1058.4 563.0" stroke="#222" stroke-width="0.9" fill="none"/>
<path d="M1215.5 520.0L1215.5 654.0" stroke="#222" stroke-width="0.9" fill="none"/>
<path d="M1058.4 530.6L1097.0 530.6" stroke="#222" stroke-width="0.9" fill="none"/>
<path d="M1180.0 530.6L1215.5 530.6" stroke="#222" stroke-width="0.9" fill="none"/>
<path d="M1058.4 530.6L1067.4 527.4L1067.4 533.8Z" fill="#111"/>
<path d="M1215.5 530.6L1206.5 533.8L1206.5 527.4Z" fill="#111"/>
<rect x="1098.5" y="515.5" width="79.5" height="31.4" fill="#e9fa17" stroke="#0a0a0a" stroke-width="3"/>
<text x="1138.5" y="537.5" font-size="16" font-weight="normal" fill="#111" text-anchor="middle" >65&#8221;</text>
<path d="M990.0 564.3L1058.0 564.3" stroke="#222" stroke-width="0.9" fill="none"/>
<path d="M990.0 658.0L1211.0 658.0" stroke="#222" stroke-width="0.9" fill="none"/>
<path d="M1000.7 564.3L1000.7 597.7" stroke="#222" stroke-width="0.9" fill="none"/>
<path d="M1000.7 632.3L1000.7 658.0" stroke="#222" stroke-width="0.9" fill="none"/>
<path d="M1000.7 564.3L1003.9 573.3L997.5 573.3Z" fill="#111"/>
<path d="M1000.7 658.0L997.5 649.0L1003.9 649.0Z" fill="#111"/>
<rect x="961.5" y="599.2" width="78.8" height="31.6" fill="#e9fa17" stroke="#0a0a0a" stroke-width="3"/>
<text x="1001.0" y="621.5" font-size="16" font-weight="normal" fill="#111" text-anchor="middle" >32&#8221;</text>
<text x="1196.7" y="819.6" font-size="16" font-weight="normal" fill="#222" text-anchor="start" textLength="85.3" lengthAdjust="spacingAndGlyphs" >ROOF VENT</text>
<rect x="1296.1" y="797.5" width="127.4" height="44.3" fill="#e4b7a5" stroke="#0a0a0a" stroke-width="3"/>
<text x="1308.5" y="815.7" font-size="13" font-weight="normal" fill="#1a1a1a" text-anchor="start" textLength="90.0" lengthAdjust="spacingAndGlyphs" >Note: Centered</text>
<text x="1308.5" y="832.6" font-size="13" font-weight="normal" fill="#1a1a1a" text-anchor="start" textLength="73.0" lengthAdjust="spacingAndGlyphs" >Left-to-Right</text>
<path d="M1162.5 708.5v13l3-3 2.5 5 2-1-2.5-5h4.5z" fill="#fff" stroke="#222" stroke-width="0.9"/>
<path d="M290.0 911.6L550.0 911.6" stroke="#1e1e1e" stroke-width="1.3" fill="none"/>
<path d="M550 911.6Q554.5 911.6 554.5 916V1135Q554.5 1139 550 1139H368Q363.5 1139 363.5 1135V1017.6H209Q204.6 1017.6 204.6 1013V960Q204.6 953 212 951.3L284 914Q286.5 911.6 290 911.6" fill="none" stroke="#1e1e1e" stroke-width="1.3"/>
<path d="M291 919.6H546.5V1072H371.8V1017Q371.8 1009.6 364 1009.6H212.4V958L286.5 921Q288 919.6 291 919.6Z" fill="none" stroke="#1e1e1e" stroke-width="1.3"/>
<path d="M371.8 1080H546.5V1131H371.8Z" fill="none" stroke="#1e1e1e" stroke-width="1.3"/>
<rect x="546.5" y="911.6" width="8.0" height="8.0" rx="2.5" fill="none" stroke="#1e1e1e" stroke-width="1.1"/>
<rect x="363.5" y="1072.0" width="8.0" height="8.0" rx="2.5" fill="none" stroke="#1e1e1e" stroke-width="1.1"/>
<rect x="546.5" y="1072.0" width="8.0" height="8.0" rx="2.5" fill="none" stroke="#1e1e1e" stroke-width="1.1"/>
<rect x="363.5" y="1131.0" width="8.0" height="8.0" rx="2.5" fill="none" stroke="#1e1e1e" stroke-width="1.1"/>
<rect x="546.5" y="1131.0" width="8.0" height="8.0" rx="2.5" fill="none" stroke="#1e1e1e" stroke-width="1.1"/>
<rect x="204.6" y="1009.6" width="10.0" height="8.0" rx="2.5" fill="none" stroke="#1e1e1e" stroke-width="1.1"/>
<path d="M204.6 961.0L212.4 961.0" stroke="#1e1e1e" stroke-width="1.1" fill="none"/>
<path d="M283.0 915.3L286.5 921.0" stroke="#1e1e1e" stroke-width="1.1" fill="none"/>
<path d="M294.0 911.6L294.0 919.6" stroke="#1e1e1e" stroke-width="1.1" fill="none"/>
<path d="M363.5 1082.0L554.5 1082.0" stroke="#1e1e1e" stroke-width="0.9" fill="none"/>
<path d="M211.5 950.8L214.5 958.0" stroke="#1e1e1e" stroke-width="1.0" fill="none"/>
<circle cx="367.5" cy="1039.0" r="1.1" fill="#222"/>
<circle cx="367.5" cy="1050.0" r="1.1" fill="#222"/>
<circle cx="367.5" cy="1061.0" r="1.1" fill="#222"/>
<circle cx="367.5" cy="1087.0" r="1.1" fill="#222"/>
<circle cx="367.5" cy="1093.0" r="1.1" fill="#222"/>
<circle cx="550.5" cy="1039.0" r="1.1" fill="#222"/>
<circle cx="550.5" cy="1050.0" r="1.1" fill="#222"/>
<circle cx="550.5" cy="1061.0" r="1.1" fill="#222"/>
<circle cx="550.5" cy="1087.0" r="1.1" fill="#222"/>
<circle cx="550.5" cy="1093.0" r="1.1" fill="#222"/>
<rect x="279.0" y="951.0" width="52.6" height="31.7" rx="0.0" fill="none" stroke="#1e1e1e" stroke-width="1.1"/>
<rect x="281.5" y="953.5" width="47.5" height="26.7" rx="0.0" fill="none" stroke="#1e1e1e" stroke-width="1.1"/>
<rect x="422.0" y="951.0" width="74.0" height="52.4" rx="0.0" fill="none" stroke="#1e1e1e" stroke-width="1.1"/>
<rect x="424.5" y="953.5" width="69.0" height="47.4" rx="0.0" fill="none" stroke="#1e1e1e" stroke-width="1.1"/>
<path d="M204.6 868.0L204.6 952.0" stroke="#222" stroke-width="0.9" fill="none"/>
<path d="M278.6 868.0L278.6 946.0" stroke="#222" stroke-width="0.9" fill="none"/>
<path d="M204.6 878.0L289.0 878.0" stroke="#222" stroke-width="0.9" fill="none"/>
<path d="M204.6 878.0L213.6 874.8L213.6 881.2Z" fill="#111"/>
<path d="M278.6 878.0L269.6 881.2L269.6 874.8Z" fill="#111"/>
<path d="M496.0 868.0L496.0 946.0" stroke="#222" stroke-width="0.9" fill="none"/>
<path d="M555.0 868.0L555.0 912.0" stroke="#222" stroke-width="0.9" fill="none"/>
<path d="M486.7 878.0L555.0 878.0" stroke="#222" stroke-width="0.9" fill="none"/>
<path d="M496.0 878.0L505.0 874.8L505.0 881.2Z" fill="#111"/>
<path d="M555.0 878.0L546.0 881.2L546.0 874.8Z" fill="#111"/>
<path d="M555.0 911.0L587.0 911.0" stroke="#222" stroke-width="0.9" fill="none"/>
<path d="M500.0 951.0L587.0 951.0" stroke="#222" stroke-width="0.9" fill="none"/>
<path d="M598.0 878.0L576.7 878.0L576.7 951.0" stroke="#222" stroke-width="0.9" fill="none"/>
<path d="M576.7 911.0L579.9 920.0L573.5 920.0Z" fill="#111"/>
<path d="M576.7 951.0L573.5 942.0L579.9 942.0Z" fill="#111"/>
<rect x="290.5" y="862.5" width="78.0" height="32.0" fill="#e9fa17" stroke="#0a0a0a" stroke-width="3"/>
<text x="329.5" y="884.0" font-size="15" font-weight="normal" fill="#111" text-anchor="middle" >x&#8221;</text>
<rect x="407.1" y="862.5" width="78.1" height="32.0" fill="#e9fa17" stroke="#0a0a0a" stroke-width="3"/>
<text x="446.0" y="884.0" font-size="15" font-weight="normal" fill="#111" text-anchor="middle" >x&#8221;</text>
<rect x="599.5" y="862.5" width="79.0" height="32.0" fill="#e9fa17" stroke="#0a0a0a" stroke-width="3"/>
<text x="639.0" y="884.0" font-size="15" font-weight="normal" fill="#111" text-anchor="middle" >x&#8221;</text>
<path d="M335.0 982.7L360.0 982.7" stroke="#222" stroke-width="0.9" fill="none"/>
<path d="M330.0 1047.0L350.2 1047.0L350.2 982.7" stroke="#222" stroke-width="0.9" fill="none"/>
<path d="M350.2 982.7L353.4 991.7L347.0 991.7Z" fill="#111"/>
<path d="M350.2 1017.6L347.0 1008.6L353.4 1008.6Z" fill="#111"/>
<rect x="249.5" y="1032.5" width="79.0" height="31.6" fill="#e9fa17" stroke="#0a0a0a" stroke-width="3"/>
<text x="289.0" y="1054.0" font-size="16" font-weight="normal" fill="#111" text-anchor="middle" >9.75&#8221;</text>
<text x="371.0" y="1171.6" font-size="16" font-weight="normal" fill="#222" text-anchor="start" textLength="171.0" lengthAdjust="spacingAndGlyphs" >DRIVER SIDE WINDOWS</text>
<rect x="365.5" y="1179.5" width="187.5" height="45.0" fill="#e4b7a5" stroke="#0a0a0a" stroke-width="3"/>
<text x="377.8" y="1200.0" font-size="13" font-weight="normal" fill="#1a1a1a" text-anchor="start" textLength="161.0" lengthAdjust="spacingAndGlyphs" >Note: Big Window Centered</text>
<text x="377.8" y="1215.5" font-size="13" font-weight="normal" fill="#1a1a1a" text-anchor="start" textLength="143.5" lengthAdjust="spacingAndGlyphs" >in Large Section of Panel</text>
<path d="M687 912H905Q909 912 909 916V1076Q909 1080 905 1080H864Q859.4 1080 859.4 1085V1135Q859.4 1139 855 1139H736Q732 1139 732 1135V1085Q732 1080 727 1080H687Q683 1080 683 1076V916Q683 912 687 912Z" fill="none" stroke="#1e1e1e" stroke-width="1.3"/>
<path d="M691 920H901V1072H858Q851.4 1072 851.4 1079V1131H740V1079Q740 1072 733 1072H691Z" fill="none" stroke="#1e1e1e" stroke-width="1.3"/>
<rect x="683.0" y="912.0" width="8.0" height="8.0" rx="2.5" fill="none" stroke="#1e1e1e" stroke-width="1.1"/>
<rect x="901.0" y="912.0" width="8.0" height="8.0" rx="2.5" fill="none" stroke="#1e1e1e" stroke-width="1.1"/>
<rect x="683.0" y="1072.0" width="8.0" height="8.0" rx="2.5" fill="none" stroke="#1e1e1e" stroke-width="1.1"/>
<rect x="901.0" y="1072.0" width="8.0" height="8.0" rx="2.5" fill="none" stroke="#1e1e1e" stroke-width="1.1"/>
<rect x="732.0" y="1131.0" width="8.0" height="8.0" rx="2.5" fill="none" stroke="#1e1e1e" stroke-width="1.1"/>
<rect x="851.4" y="1131.0" width="8.0" height="8.0" rx="2.5" fill="none" stroke="#1e1e1e" stroke-width="1.1"/>
<path d="M740.0 1131.0L740.0 1139.0" stroke="#1e1e1e" stroke-width="1.0" fill="none"/>
<path d="M851.4 1131.0L851.4 1139.0" stroke="#1e1e1e" stroke-width="1.0" fill="none"/>
<rect x="763.0" y="942.0" width="65.0" height="183.7" rx="0.0" fill="none" stroke="#1e1e1e" stroke-width="1.1"/>
<path d="M763.0 958.0L828.0 958.0" stroke="#222" stroke-width="1.1" fill="none"/>
<path d="M763.0 1011.7L828.0 1011.7" stroke="#222" stroke-width="1.1" fill="none"/>
<path d="M763.0 1017.0L828.0 1017.0" stroke="#222" stroke-width="1.1" fill="none"/>
<path d="M732.0 1139.0L732.0 1180.0" stroke="#222" stroke-width="0.9" fill="none"/>
<path d="M763.8 1128.0L763.8 1180.0" stroke="#222" stroke-width="0.9" fill="none"/>
<path d="M711.4 1170.0L732.0 1170.0" stroke="#222" stroke-width="0.9" fill="none"/>
<path d="M732.0 1170.0L723.0 1173.2L723.0 1166.8Z" fill="#111"/>
<path d="M783.0 1170.0L763.8 1170.0" stroke="#222" stroke-width="0.9" fill="none"/>
<path d="M763.8 1170.0L772.8 1166.8L772.8 1173.2Z" fill="#111"/>
<rect x="630.9" y="1152.9" width="79.0" height="32.0" fill="#e9fa17" stroke="#0a0a0a" stroke-width="3"/>
<text x="670.0" y="1175.0" font-size="16" font-weight="normal" fill="#111" text-anchor="middle" >4&#8221;</text>
<text x="646.0" y="1199.7" font-size="14" font-weight="normal" fill="#222" text-anchor="start" textLength="47.6" lengthAdjust="spacingAndGlyphs" >MIN 4&quot;</text>
<text x="749.0" y="1211.0" font-size="16" font-weight="normal" fill="#222" text-anchor="start" textLength="90.6" lengthAdjust="spacingAndGlyphs" >REAR DOOR</text>
<rect x="726.2" y="1226.3" width="136.7" height="26.1" fill="#e4b7a5" stroke="#0a0a0a" stroke-width="3"/>
<text x="738.0" y="1244.0" font-size="13" font-weight="normal" fill="#1a1a1a" text-anchor="start" textLength="108.7" lengthAdjust="spacingAndGlyphs" >Note: Biased to LH</text>
<path d="M1063 912H1319Q1322.5 912 1325 914L1401.6 951.3Q1409 953 1409 960V1013Q1409 1017.7 1404 1017.7H1250.6V1135Q1250.6 1139 1246 1139H1063Q1058.7 1139 1058.7 1135V916Q1058.7 912 1063 912Z" fill="none" stroke="#1e1e1e" stroke-width="1.3"/>
<path d="M1067 919.6H1318Q1321 919.6 1322.6 921L1399 958L1401.1 958V1009.7H1249Q1241.6 1009.7 1241.6 1017V1072.8H1067Z" fill="none" stroke="#1e1e1e" stroke-width="1.3"/>
<path d="M1067 1080.7H1241.6V1131H1067Z" fill="none" stroke="#1e1e1e" stroke-width="1.3"/>
<rect x="1058.7" y="912.0" width="8.0" height="8.0" rx="2.5" fill="none" stroke="#1e1e1e" stroke-width="1.1"/>
<rect x="1058.7" y="1072.8" width="8.0" height="8.0" rx="2.5" fill="none" stroke="#1e1e1e" stroke-width="1.1"/>
<rect x="1241.6" y="1072.8" width="8.0" height="8.0" rx="2.5" fill="none" stroke="#1e1e1e" stroke-width="1.1"/>
<rect x="1058.7" y="1131.0" width="8.0" height="8.0" rx="2.5" fill="none" stroke="#1e1e1e" stroke-width="1.1"/>
<rect x="1241.6" y="1131.0" width="8.0" height="8.0" rx="2.5" fill="none" stroke="#1e1e1e" stroke-width="1.1"/>
<rect x="1399.0" y="1009.7" width="10.0" height="8.0" rx="2.5" fill="none" stroke="#1e1e1e" stroke-width="1.1"/>
<path d="M1401.1 961.0L1409.0 961.0" stroke="#1e1e1e" stroke-width="1.1" fill="none"/>
<path d="M1330.5 916.8L1326.5 923.0" stroke="#1e1e1e" stroke-width="1.1" fill="none"/>
<path d="M1315.0 912.0L1315.0 919.6" stroke="#1e1e1e" stroke-width="1.1" fill="none"/>
<path d="M1402.0 950.8L1399.0 958.0" stroke="#1e1e1e" stroke-width="1.0" fill="none"/>
<path d="M1058.7 1083.0L1250.6 1083.0" stroke="#1e1e1e" stroke-width="0.9" fill="none"/>
<circle cx="1062.7" cy="1039.0" r="1.1" fill="#222"/>
<circle cx="1062.7" cy="1050.0" r="1.1" fill="#222"/>
<circle cx="1062.7" cy="1061.0" r="1.1" fill="#222"/>
<circle cx="1062.7" cy="1087.0" r="1.1" fill="#222"/>
<circle cx="1062.7" cy="1093.0" r="1.1" fill="#222"/>
<circle cx="1245.6" cy="1039.0" r="1.1" fill="#222"/>
<circle cx="1245.6" cy="1050.0" r="1.1" fill="#222"/>
<circle cx="1245.6" cy="1061.0" r="1.1" fill="#222"/>
<circle cx="1245.6" cy="1087.0" r="1.1" fill="#222"/>
<circle cx="1245.6" cy="1093.0" r="1.1" fill="#222"/>
<rect x="1117.6" y="951.3" width="73.3" height="52.3" rx="0.0" fill="none" stroke="#1e1e1e" stroke-width="1.1"/>
<rect x="1120.0" y="953.8" width="68.4" height="47.3" rx="0.0" fill="none" stroke="#1e1e1e" stroke-width="1.1"/>
<rect x="1282.0" y="951.3" width="52.7" height="31.7" rx="0.0" fill="none" stroke="#1e1e1e" stroke-width="1.1"/>
<rect x="1284.5" y="953.8" width="47.7" height="26.7" rx="0.0" fill="none" stroke="#1e1e1e" stroke-width="1.1"/>
<rect x="1287.7" y="1032" width="80" height="25.6" rx="12.8" fill="none" stroke="#333" stroke-width="1"/>
<path d="M1058.7 868.0L1058.7 912.0" stroke="#222" stroke-width="0.9" fill="none"/>
<path d="M1117.6 868.0L1117.6 946.0" stroke="#222" stroke-width="0.9" fill="none"/>
<path d="M1058.7 878.0L1126.0 878.0" stroke="#222" stroke-width="0.9" fill="none"/>
<path d="M1058.7 878.0L1067.7 874.8L1067.7 881.2Z" fill="#111"/>
<path d="M1117.6 878.0L1108.6 881.2L1108.6 874.8Z" fill="#111"/>
<path d="M1334.7 868.0L1334.7 946.0" stroke="#222" stroke-width="0.9" fill="none"/>
<path d="M1409.0 868.0L1409.0 952.0" stroke="#222" stroke-width="0.9" fill="none"/>
<path d="M1325.7 878.0L1409.0 878.0" stroke="#222" stroke-width="0.9" fill="none"/>
<path d="M1334.7 878.0L1343.7 874.8L1343.7 881.2Z" fill="#111"/>
<path d="M1409.0 878.0L1400.0 881.2L1400.0 874.8Z" fill="#111"/>
<path d="M1020.0 912.0L1058.7 912.0" stroke="#222" stroke-width="0.9" fill="none"/>
<path d="M1020.0 951.0L1114.0 951.0" stroke="#222" stroke-width="0.9" fill="none"/>
<path d="M1012.6 878.0L1032.0 878.0L1032.0 951.0" stroke="#222" stroke-width="0.9" fill="none"/>
<path d="M1032.0 912.0L1035.2 921.0L1028.8 921.0Z" fill="#111"/>
<path d="M1032.0 951.0L1028.8 942.0L1035.2 942.0Z" fill="#111"/>
<path d="M1256.0 983.0L1278.0 983.0" stroke="#222" stroke-width="0.9" fill="none"/>
<path d="M1266.8 983.0L1266.8 1045.0L1288.0 1045.0" stroke="#222" stroke-width="0.9" fill="none"/>
<path d="M1266.8 983.0L1270.0 992.0L1263.6 992.0Z" fill="#111"/>
<path d="M1266.8 1017.0L1263.6 1008.0L1270.0 1008.0Z" fill="#111"/>
<rect x="932.5" y="862.5" width="78.6" height="32.0" fill="#e9fa17" stroke="#0a0a0a" stroke-width="3"/>
<text x="971.8" y="884.0" font-size="15" font-weight="normal" fill="#111" text-anchor="middle" >x&#8221;</text>
<rect x="1127.5" y="863.5" width="78.7" height="31.0" fill="#e9fa17" stroke="#0a0a0a" stroke-width="3"/>
<text x="1166.8" y="884.5" font-size="15" font-weight="normal" fill="#111" text-anchor="middle" >x&#8221;</text>
<rect x="1245.5" y="862.5" width="78.7" height="32.0" fill="#e9fa17" stroke="#0a0a0a" stroke-width="3"/>
<text x="1284.8" y="884.0" font-size="15" font-weight="normal" fill="#111" text-anchor="middle" >x&#8221;</text>
<text x="1056.5" y="1176.0" font-size="16" font-weight="normal" fill="#222" text-anchor="start" textLength="205.0" lengthAdjust="spacingAndGlyphs" >PASSENGER SIDE WINDOWS</text>
<rect x="938.5" y="1216.5" width="572" height="101" fill="none" stroke="#c8c8c8" stroke-width="0.9"/>
<rect x="834.5" y="1288.5" width="104" height="29" fill="none" stroke="#c8c8c8" stroke-width="0.9"/>
<path d="M1048.0 1216.5L1048.0 1317.5" stroke="#c8c8c8" stroke-width="0.9" fill="none"/>
<path d="M1095.8 1216.5L1095.8 1317.5" stroke="#c8c8c8" stroke-width="0.9" fill="none"/>
<path d="M1150.4 1216.5L1150.4 1317.5" stroke="#c8c8c8" stroke-width="0.9" fill="none"/>
<path d="M1192.4 1216.5L1192.4 1317.5" stroke="#c8c8c8" stroke-width="0.9" fill="none"/>
<path d="M1048.0 1241.4L1192.4 1241.4" stroke="#c8c8c8" stroke-width="0.9" fill="none"/>
<path d="M1048.0 1257.4L1511.0 1257.4" stroke="#c8c8c8" stroke-width="0.9" fill="none"/>
<path d="M1048.0 1272.8L1511.0 1272.8" stroke="#c8c8c8" stroke-width="0.9" fill="none"/>
<path d="M938.5 1288.2L1192.4 1288.2" stroke="#c8c8c8" stroke-width="0.9" fill="none"/>
<path d="M938.5 1303.6L1511.0 1303.6" stroke="#c8c8c8" stroke-width="0.9" fill="none"/>
<path d="M1231.6 1272.8L1231.6 1303.6" stroke="#c8c8c8" stroke-width="0.9" fill="none"/>
<path d="M1474.7 1272.8L1474.7 1303.6" stroke="#c8c8c8" stroke-width="0.9" fill="none"/>
<path d="M1267.0 1303.6L1267.0 1317.5" stroke="#c8c8c8" stroke-width="0.9" fill="none"/>
<path d="M1429.6 1303.6L1429.6 1317.5" stroke="#c8c8c8" stroke-width="0.9" fill="none"/>
<text x="944.0" y="1227.5" font-size="6.3" font-weight="bold" fill="#222" text-anchor="start" textLength="92.0" lengthAdjust="spacingAndGlyphs" >DIMENSIONS ARE IN INCHES</text>
<text x="944.0" y="1236.0" font-size="6.3" font-weight="normal" fill="#333" text-anchor="start" textLength="46.0" lengthAdjust="spacingAndGlyphs" >TOLERANCES:</text>
<text x="944.0" y="1244.8" font-size="6.3" font-weight="normal" fill="#333" text-anchor="start" textLength="36.0" lengthAdjust="spacingAndGlyphs" >DECIMALS</text>
<text x="990.0" y="1244.8" font-size="6.3" font-weight="normal" fill="#333" text-anchor="start" textLength="37.0" lengthAdjust="spacingAndGlyphs" >XXX &#177; .010</text>
<text x="993.0" y="1253.6" font-size="6.3" font-weight="normal" fill="#333" text-anchor="start" textLength="34.0" lengthAdjust="spacingAndGlyphs" >XX &#177; .030</text>
<text x="998.0" y="1262.4" font-size="6.3" font-weight="normal" fill="#333" text-anchor="start" textLength="29.0" lengthAdjust="spacingAndGlyphs" >X &#177; .100</text>
<text x="944.0" y="1271.0" font-size="6.3" font-weight="normal" fill="#333" text-anchor="start" textLength="41.0" lengthAdjust="spacingAndGlyphs" >FRACTIONS</text>
<text x="1007.0" y="1271.0" font-size="6.3" font-weight="normal" fill="#333" text-anchor="start" textLength="20.0" lengthAdjust="spacingAndGlyphs" >&#177; 1/16</text>
<text x="944.0" y="1279.8" font-size="6.3" font-weight="normal" fill="#333" text-anchor="start" textLength="28.0" lengthAdjust="spacingAndGlyphs" >ANGLES</text>
<text x="1007.0" y="1279.8" font-size="6.3" font-weight="normal" fill="#333" text-anchor="start" textLength="16.0" lengthAdjust="spacingAndGlyphs" >&#177; .50</text>
<text x="840.0" y="1297.5" font-size="6.3" font-weight="bold" fill="#222" text-anchor="start" textLength="93.0" lengthAdjust="spacingAndGlyphs" >UNLESS OTHERWISE SPECIFIED:</text>
<text x="840.0" y="1305.8" font-size="6.3" font-weight="normal" fill="#333" text-anchor="start" textLength="95.0" lengthAdjust="spacingAndGlyphs" >1.  REMOVE ALL SHARP EDGES</text>
<text x="840.0" y="1313.8" font-size="6.3" font-weight="normal" fill="#333" text-anchor="start" textLength="92.0" lengthAdjust="spacingAndGlyphs" >2.  DO NOT SCALE DRAWING</text>
<text x="943.0" y="1297.5" font-size="6.3" font-weight="normal" fill="#333" text-anchor="start" textLength="32.0" lengthAdjust="spacingAndGlyphs" >MATERIAL:</text>
<text x="985.0" y="1297.5" font-size="6.3" font-weight="normal" fill="#333" text-anchor="start" textLength="33.0" lengthAdjust="spacingAndGlyphs" >SEE NOTES</text>
<text x="943.0" y="1313.3" font-size="6.3" font-weight="normal" fill="#333" text-anchor="start" textLength="20.0" lengthAdjust="spacingAndGlyphs" >FINISH:</text>
<text x="973.0" y="1313.3" font-size="6.3" font-weight="normal" fill="#333" text-anchor="start" textLength="33.0" lengthAdjust="spacingAndGlyphs" >SEE NOTES</text>
<text x="1053.0" y="1251.5" font-size="6.8" font-weight="normal" fill="#333" text-anchor="start" textLength="27.0" lengthAdjust="spacingAndGlyphs" >DRAWN</text>
<text x="1053.0" y="1266.8" font-size="6.8" font-weight="normal" fill="#333" text-anchor="start" textLength="34.0" lengthAdjust="spacingAndGlyphs" >CHECKED</text>
<text x="1053.0" y="1282.2" font-size="6.8" font-weight="normal" fill="#333" text-anchor="start" textLength="37.0" lengthAdjust="spacingAndGlyphs" >ENG APPR.</text>
<text x="1053.0" y="1297.6" font-size="6.8" font-weight="normal" fill="#333" text-anchor="start" textLength="38.0" lengthAdjust="spacingAndGlyphs" >MFG APPR.</text>
<text x="1053.0" y="1313.0" font-size="6.8" font-weight="normal" fill="#333" text-anchor="start" textLength="14.0" lengthAdjust="spacingAndGlyphs" >Q.A.</text>
<text x="1111.0" y="1231.5" font-size="6.8" font-weight="normal" fill="#555" text-anchor="start" textLength="22.0" lengthAdjust="spacingAndGlyphs" >NAME</text>
<text x="1163.0" y="1231.5" font-size="6.8" font-weight="normal" fill="#555" text-anchor="start" textLength="18.0" lengthAdjust="spacingAndGlyphs" >DATE</text>
<text x="1198" y="1238.5" font-size="27" font-weight="bold" fill="#1d1f7a" textLength="41" lengthAdjust="spacingAndGlyphs">CC</text>
<path d="M1234 1232h7l4.5 11 6.5-11h5l-12 20h-4z" fill="#1d1f7a"/>
<text x="1268.0" y="1225.5" font-size="6.8" font-weight="normal" fill="#444" text-anchor="start" textLength="90.0" lengthAdjust="spacingAndGlyphs" >8775 C Jim Bailey Crescent</text>
<text x="1268.0" y="1232.5" font-size="6.8" font-weight="normal" fill="#444" text-anchor="start" textLength="45.0" lengthAdjust="spacingAndGlyphs" >Kelowna, B.C.</text>
<text x="1268.0" y="1239.5" font-size="6.8" font-weight="normal" fill="#444" text-anchor="start" textLength="59.0" lengthAdjust="spacingAndGlyphs" >Canada, V4V 2L7</text>
<text x="1268.0" y="1253.0" font-size="6.6" font-weight="normal" fill="#666" text-anchor="start" textLength="142.0" lengthAdjust="spacingAndGlyphs" >INNOVATIVE COMPOSITE PANEL SYSTEMS</text>
<text x="1453.0" y="1227.5" font-size="6.6" font-weight="normal" fill="#444" text-anchor="end" textLength="27.0" lengthAdjust="spacingAndGlyphs" >website:</text>
<text x="1456.0" y="1227.5" font-size="6.6" font-weight="normal" fill="#444" text-anchor="start" textLength="49.0" lengthAdjust="spacingAndGlyphs" >www.ccvbc.com</text>
<text x="1453.0" y="1234.5" font-size="6.6" font-weight="normal" fill="#444" text-anchor="end" textLength="20.0" lengthAdjust="spacingAndGlyphs" >email:</text>
<text x="1456.0" y="1234.5" font-size="6.6" font-weight="normal" fill="#444" text-anchor="start" textLength="49.0" lengthAdjust="spacingAndGlyphs" >info@ccvbc.com</text>
<text x="1453.0" y="1241.5" font-size="6.6" font-weight="normal" fill="#444" text-anchor="end" textLength="13.0" lengthAdjust="spacingAndGlyphs" >TEL:</text>
<text x="1456.0" y="1241.5" font-size="6.6" font-weight="normal" fill="#444" text-anchor="start" textLength="38.0" lengthAdjust="spacingAndGlyphs" >(250) 766-2282</text>
<text x="1453.0" y="1248.5" font-size="6.6" font-weight="normal" fill="#444" text-anchor="end" textLength="14.0" lengthAdjust="spacingAndGlyphs" >FAX:</text>
<text x="1456.0" y="1248.5" font-size="6.6" font-weight="normal" fill="#444" text-anchor="start" textLength="38.0" lengthAdjust="spacingAndGlyphs" >(250) 766-0902</text>
<text x="1196.0" y="1269.6" font-size="11.5" font-weight="normal" fill="#222" text-anchor="start" textLength="26.0" lengthAdjust="spacingAndGlyphs" >TITLE:</text>
<text x="1202.0" y="1283.6" font-size="12" font-weight="normal" fill="#222" text-anchor="start" textLength="19.5" lengthAdjust="spacingAndGlyphs" >SIZE</text>
<text x="1207.5" y="1299.7" font-size="15.5" font-weight="normal" fill="#222" text-anchor="start" >B</text>
<text x="1237.0" y="1283.6" font-size="12" font-weight="normal" fill="#222" text-anchor="start" textLength="58.0" lengthAdjust="spacingAndGlyphs" >DWG.  NO.</text>
<text x="1482.0" y="1283.6" font-size="12" font-weight="normal" fill="#222" text-anchor="start" textLength="20.0" lengthAdjust="spacingAndGlyphs" >REV</text>
<text x="1485.5" y="1299.7" font-size="15.5" font-weight="normal" fill="#222" text-anchor="start" >A</text>
<text x="1203.0" y="1315.0" font-size="11.5" font-weight="normal" fill="#222" text-anchor="start" textLength="61.0" lengthAdjust="spacingAndGlyphs" >SCALE: 1:32</text>
<text x="1439.0" y="1315.0" font-size="11.5" font-weight="normal" fill="#222" text-anchor="start" textLength="64.0" lengthAdjust="spacingAndGlyphs" >SHEET 1 OF 1</text>
<rect x="1064.5" y="1180.2" width="187.0" height="43.6" fill="#e4b7a5" stroke="#0a0a0a" stroke-width="3"/>
<text x="1076.3" y="1198.0" font-size="13" font-weight="normal" fill="#1a1a1a" text-anchor="start" textLength="162.0" lengthAdjust="spacingAndGlyphs" >Note: Big Window Centered</text>
<text x="1076.3" y="1214.5" font-size="13" font-weight="normal" fill="#1a1a1a" text-anchor="start" textLength="144.0" lengthAdjust="spacingAndGlyphs" >in Large Section of Panel</text>
</g></svg>

</body></html>
